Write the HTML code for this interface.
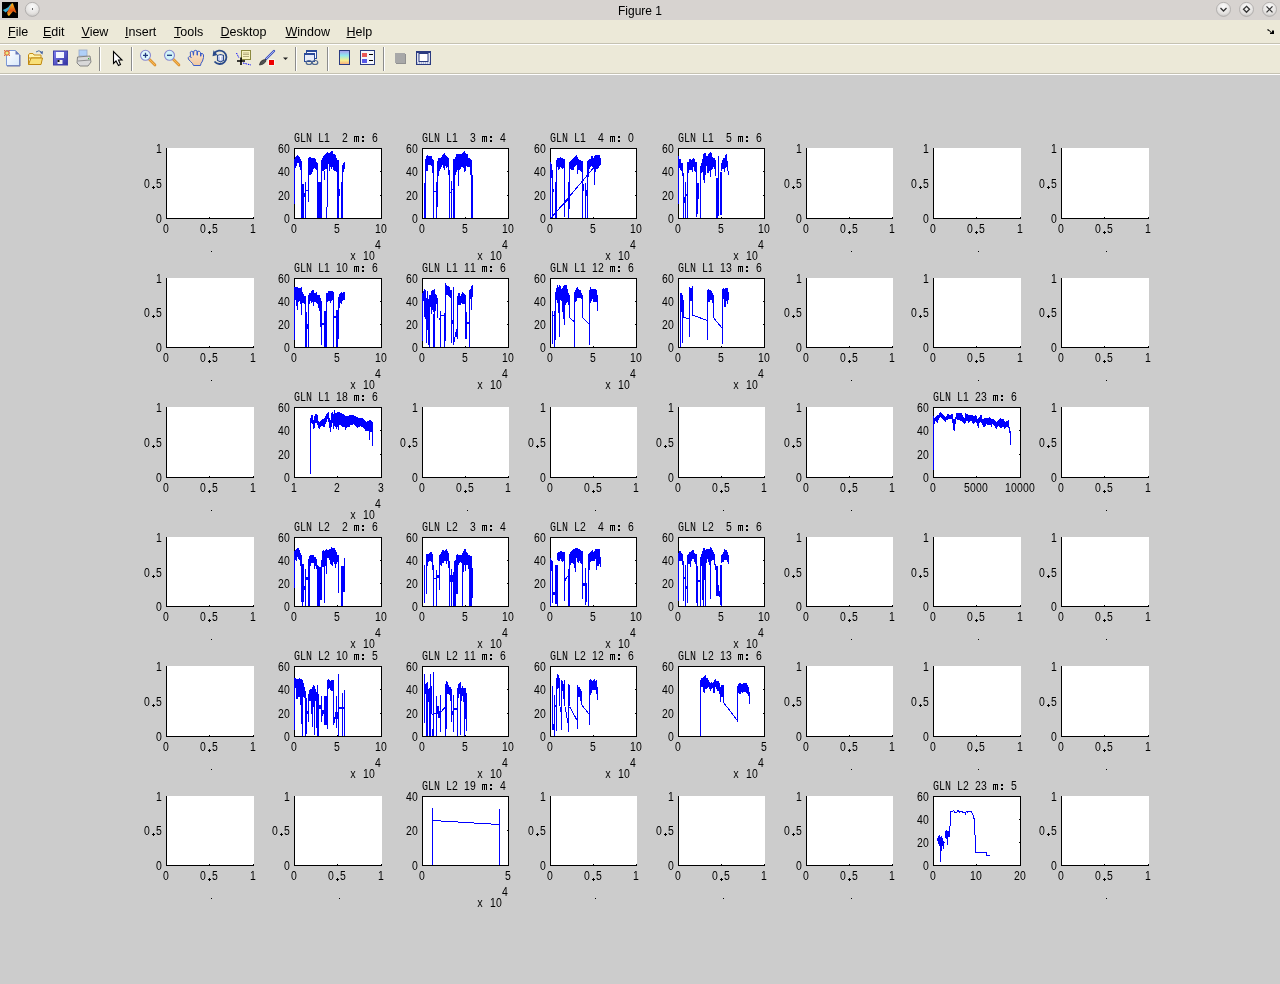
<!DOCTYPE html>
<html><head><meta charset="utf-8"><style>
html,body{margin:0;padding:0;width:1280px;height:984px;overflow:hidden;background:#cccccc;position:relative}
i{position:absolute;display:block}
b{position:absolute;font-weight:normal;font-family:"Liberation Mono",monospace;font-size:12px;line-height:12px;white-space:pre;color:#000;transform:scaleX(0.8333);transform-origin:0 0}
b.d{font-family:"Liberation Sans",sans-serif;transform:scaleX(0.87)}
.dot{width:3px;height:3px;background:linear-gradient(#000,#000) 0 1px/3px 1px no-repeat,linear-gradient(#000,#000) 1px 0/1px 3px no-repeat}
.col{width:2px;height:6px;background:linear-gradient(#000,#000) 0 0/2px 2px no-repeat,linear-gradient(#000,#000) 0 4px/2px 2px no-repeat}
.m{width:5px;height:6px;background:linear-gradient(#000,#000) 0 0/5px 1px no-repeat,linear-gradient(#000,#000) 0 0/1px 6px no-repeat,linear-gradient(#000,#000) 2px 0/1px 6px no-repeat,linear-gradient(#000,#000) 4px 0/1px 6px no-repeat}
#lab{position:absolute;left:0;top:0;width:1280px;height:984px;will-change:transform}
.mb{position:absolute;font-family:"Liberation Sans",sans-serif;font-size:12.5px;line-height:13px;color:#000;white-space:pre;text-underline-offset:1px}
#chrome{position:absolute;left:0;top:0;width:1280px;height:75px;will-change:transform}
</style></head><body>
<div id="chrome"><div style="position:absolute;left:0;top:0;width:1280px;height:20px;background:#d7d3d0"></div>
<div style="position:absolute;left:0;top:20px;width:1280px;height:23px;background:#ece9d8"></div>
<div style="position:absolute;left:0;top:43px;width:1280px;height:1px;background:#c5c2b2"></div>
<div style="position:absolute;left:0;top:44px;width:1280px;height:1px;background:#ffffff"></div>
<div style="position:absolute;left:0;top:45px;width:1280px;height:28px;background:#ece9d8"></div>
<div style="position:absolute;left:0;top:73px;width:1280px;height:1px;background:#c5c2b2"></div>
<div style="position:absolute;left:0;top:74px;width:1280px;height:1px;background:#ffffff"></div>
<div class="mb" style="left:618px;top:5px;font-size:12px;line-height:12px">Figure 1</div>
<div class="mb" style="left:8px;top:26px"><u>F</u>ile</div>
<div class="mb" style="left:43px;top:26px"><u>E</u>dit</div>
<div class="mb" style="left:81.5px;top:26px"><u>V</u>iew</div>
<div class="mb" style="left:125px;top:26px"><u>I</u>nsert</div>
<div class="mb" style="left:174px;top:26px"><u>T</u>ools</div>
<div class="mb" style="left:220.5px;top:26px"><u>D</u>esktop</div>
<div class="mb" style="left:285.5px;top:26px"><u>W</u>indow</div>
<div class="mb" style="left:346.5px;top:26px"><u>H</u>elp</div>
<svg style="position:absolute;left:0;top:0" width="1280" height="75" viewBox="0 0 1280 75">
<defs>
<radialGradient id="btn" cx="50%" cy="30%" r="70%"><stop offset="0" stop-color="#fafafa"/><stop offset="0.7" stop-color="#e4e2e0"/><stop offset="1" stop-color="#c8c6c4"/></radialGradient>
<linearGradient id="cbar" x1="0" y1="0" x2="0" y2="1"><stop offset="0" stop-color="#a898f0"/><stop offset="0.35" stop-color="#90e8f0"/><stop offset="0.7" stop-color="#f8f090"/><stop offset="1" stop-color="#f8a878"/></linearGradient>
<linearGradient id="page" x1="0" y1="0" x2="1" y2="1"><stop offset="0" stop-color="#ffffff"/><stop offset="1" stop-color="#d8e8fa"/></linearGradient>
<linearGradient id="fold" x1="0" y1="0" x2="0" y2="1"><stop offset="0" stop-color="#fff8c0"/><stop offset="1" stop-color="#f0d060"/></linearGradient>
<linearGradient id="disk" x1="0" y1="0" x2="1" y2="1"><stop offset="0" stop-color="#8080f0"/><stop offset="1" stop-color="#3030a0"/></linearGradient>
<linearGradient id="skin" x1="0" y1="0" x2="0" y2="1"><stop offset="0" stop-color="#fbe6d0"/><stop offset="1" stop-color="#f0c8a0"/></linearGradient>
<linearGradient id="peak" x1="0" y1="0" x2="0" y2="1"><stop offset="0" stop-color="#f8c020"/><stop offset="0.6" stop-color="#e05010"/><stop offset="1" stop-color="#f8d020"/></linearGradient>
</defs>
<!-- matlab logo -->
<rect x="2" y="2" width="16" height="16" fill="#000"/>
<path d="M2.8,10.1 L5.6,8.8 L8.1,7.3 L11.2,3.6 L10.9,6 L8.6,10.1 L5.6,12.4 Z" fill="#3cb0d8"/>
<path d="M7.1,12.4 L8.6,9.4 L11.6,3.4 L12.9,3.2 L14.4,7.5 L16.5,12.7 L15.2,12.4 L13.1,11.2 L10.5,14.2 L9,16.1 L7.7,15 Z" fill="url(#peak)"/>
<!-- left circle button -->
<circle cx="32.3" cy="9.4" r="7" fill="url(#btn)" stroke="#a8a6a4" stroke-width="0.8"/>
<rect x="32" y="8" width="1" height="2" fill="#666"/>
<!-- right buttons -->
<circle cx="1223.5" cy="9.4" r="7" fill="url(#btn)" stroke="#a8a6a4" stroke-width="0.8"/>
<path d="M1220.5,8 L1223.5,11 L1226.5,8" fill="none" stroke="#333" stroke-width="1.3"/>
<circle cx="1246.5" cy="9.4" r="7" fill="url(#btn)" stroke="#a8a6a4" stroke-width="0.8"/>
<path d="M1246.5,6.3 L1249.5,9.3 L1246.5,12.3 L1243.5,9.3 Z" fill="none" stroke="#333" stroke-width="1.3"/>
<circle cx="1269.5" cy="9.4" r="7" fill="url(#btn)" stroke="#a8a6a4" stroke-width="0.8"/>
<path d="M1266.5,6.4 L1272.5,12.4 M1272.5,6.4 L1266.5,12.4" fill="none" stroke="#333" stroke-width="1.3"/>
<!-- undock arrow -->
<path d="M1267,30 L1268,29 L1272,32.5 L1272,30.5 L1274,30.5 L1274,34 L1270,34 L1270,32.5 L1271.5,32.5 Z" fill="#000"/>
<!-- new file -->
<path d="M6.5,50.5 L15.5,50.5 L19.5,54.5 L19.5,65.5 L6.5,65.5 Z" fill="url(#page)" stroke="#7c9ad8" stroke-width="1"/>
<path d="M7,66 L20,66 L20,55" fill="none" stroke="#6870a8" stroke-width="1"/>
<path d="M15.5,50.5 L15.5,54.5 L19.5,54.5 Z" fill="#6878b8"/>
<circle cx="7" cy="53" r="2.2" fill="#e8f080" stroke="#e07040" stroke-width="1.2"/>
<path d="M4,50 L5,51 M10,50 L9,51 M4,56 L5,55 M10,56 L9,55" stroke="#e07040" stroke-width="1"/>
<!-- open folder -->
<path d="M28.5,55 L29.5,53.5 L33,53.5 L34,55 L41,55 L41,58 L28.5,58 Z" fill="#fff4b0" stroke="#c89018" stroke-width="1"/>
<path d="M28.5,64.5 L31,58 L42.5,58 L41,64.5 Z" fill="#f8e078" stroke="#c08810" stroke-width="1"/>
<path d="M28.5,55 L28.5,64.5" stroke="#c08810" stroke-width="1"/>
<path d="M36,52 Q39,49.5 41.5,52" fill="none" stroke="#5070a8" stroke-width="1"/>
<path d="M40,52.5 L43,51 L42.5,54.5 Z" fill="#4060a0"/>
<!-- save -->
<rect x="53.5" y="51" width="14" height="14" fill="url(#disk)" stroke="#4040a8" stroke-width="1"/>
<rect x="56" y="52" width="8" height="6" fill="#f4f6ff"/>
<rect x="57.5" y="60" width="5" height="4" fill="#f0f0f0"/>
<rect x="57.5" y="60" width="2" height="2" fill="#111"/>
<!-- print -->
<rect x="79" y="50" width="8" height="6" fill="#b0d0f8" stroke="#98a8c8" stroke-width="0.8"/>
<path d="M77.5,57 L90,56 L91,62 L88,66 L80,66 L77,63 Z" fill="#d8d8d8" stroke="#707070" stroke-width="0.8"/>
<path d="M78,61 L90,60" stroke="#909090" stroke-width="1"/>
<rect x="88" y="58" width="1.2" height="1.2" fill="#40b040"/>
<!-- separators -->
<rect x="99" y="47" width="1" height="24" fill="#8c8c8c"/><rect x="100" y="47" width="1" height="24" fill="#fff"/>
<rect x="131" y="47" width="1" height="24" fill="#8c8c8c"/><rect x="132" y="47" width="1" height="24" fill="#fff"/>
<rect x="295" y="47" width="1" height="24" fill="#8c8c8c"/><rect x="296" y="47" width="1" height="24" fill="#fff"/>
<rect x="327" y="47" width="1" height="24" fill="#8c8c8c"/><rect x="328" y="47" width="1" height="24" fill="#fff"/>
<rect x="383" y="47" width="1" height="24" fill="#8c8c8c"/><rect x="384" y="47" width="1" height="24" fill="#fff"/>
<!-- arrow cursor -->
<path d="M113.5,51.5 L113.5,63.5 L116,61 L118.5,65.5 L120.5,64.5 L118.5,60 L122,60 Z" fill="#fff" stroke="#000" stroke-width="1.1"/>
<!-- zoom in -->
<path d="M149.5,59.5 L155,65" stroke="#d08020" stroke-width="2.6" stroke-linecap="round"/>
<path d="M149.5,59.5 L155,65" stroke="#f8b850" stroke-width="1.2" stroke-linecap="round"/>
<circle cx="145.5" cy="55.3" r="5" fill="#e0f8fc" stroke="#8888d0" stroke-width="1.1"/>
<path d="M143,55.3 L148,55.3 M145.5,52.8 L145.5,57.8" stroke="#203880" stroke-width="1.3"/>
<!-- zoom out -->
<path d="M173.5,59.5 L179,65" stroke="#d08020" stroke-width="2.6" stroke-linecap="round"/>
<path d="M173.5,59.5 L179,65" stroke="#f8b850" stroke-width="1.2" stroke-linecap="round"/>
<circle cx="169.5" cy="55.3" r="5" fill="#d0f4f8" stroke="#8888d0" stroke-width="1.1"/>
<path d="M167,55.3 L172,55.3" stroke="#203880" stroke-width="1.3"/>
<!-- pan hand -->
<path d="M188.3,57.5 L189.5,56.3 L190.5,56.8 L190.3,52 L191.8,51.2 L193,52 L193.5,55 L193.8,51 L195.8,50.3 L197,51 L197.3,55 L197.5,51.3 L199.3,51.2 L200.5,52.5 L200.7,56 L201,53.5 L202.5,53.5 L203.5,55 L203.5,57.5 L202.5,61 L201,63.5 L200.5,65.5 L193.5,65.5 L192.5,63.5 L190.5,61.5 L188.3,59 Z" fill="url(#skin)" stroke="#3a5cc8" stroke-width="1"/>
<path d="M193.4,52.5 L193.4,55.5 M197.3,52 L197.3,55.5 M200.7,53.5 L200.7,56.5 M190.5,56.8 L191.5,58" stroke="#3a5cc8" stroke-width="1" fill="none"/>
<!-- rotate -->
<path d="M214.2,53.5 A6.7,6.7 0 1 1 214.5,61.5" fill="none" stroke="#2a4a8a" stroke-width="1.8"/>
<path d="M212.5,56.2 L213.6,50.3 L217.5,55 Z" fill="#2a4a8a"/>
<path d="M217.5,55.5 L220.5,54.5 L223.5,55.5 L223.5,60.5 L220.5,62 L217.5,60.5 Z" fill="#c8d0f0" stroke="#2a4a8a" stroke-width="1.1"/>
<path d="M218.5,56 L222.5,56 M220.5,56 L220.5,60" stroke="#ffffff" stroke-width="0.9"/>
<!-- data cursor -->
<rect x="241.5" y="50.5" width="9" height="9" fill="#f8f4c0" stroke="#8c8a40" stroke-width="1"/>
<path d="M243,53 L249,53 M243,54.5 L249,54.5 M243,56.5 L249,56.5" stroke="#a8a070" stroke-width="0.8"/>
<path d="M236.5,53 L239,58" stroke="#0000ff" stroke-width="1" stroke-dasharray="1.5,1"/>
<path d="M243,63 L251,65" stroke="#0000ff" stroke-width="1" stroke-dasharray="1.5,1"/>
<path d="M237,61 L245,61 M241,57.5 L241,65" stroke="#000" stroke-width="1.6"/>
<!-- brush -->
<path d="M266,59 L274,51" stroke="#3a50c0" stroke-width="2.4" stroke-linecap="round"/>
<path d="M266,59 L274,51" stroke="#c0c8f8" stroke-width="0.8"/>
<path d="M259.5,65 Q260,61 263,60 L266,59.5 L265.5,62 Q263,65 259.5,65 Z" fill="#505050" stroke="#303030" stroke-width="0.8"/>
<rect x="268.5" y="59.5" width="6" height="6" fill="#fff"/>
<rect x="269" y="60" width="5" height="5" fill="#ee0000"/>
<!-- dropdown -->
<path d="M283,57.5 L288,57.5 L285.5,60 Z" fill="#222"/>
<!-- link plots -->
<rect x="306.5" y="50.5" width="10" height="8" fill="#f8f8ff" stroke="#2a4a9a" stroke-width="1"/>
<rect x="306" y="50" width="11" height="2" fill="#2a4a9a"/>
<rect x="304.5" y="53.5" width="10" height="8" fill="#e8ecf8" stroke="#2a4a9a" stroke-width="1"/>
<rect x="304" y="53" width="11" height="2" fill="#2a4a9a"/>
<ellipse cx="309" cy="62.5" rx="2.8" ry="2" fill="none" stroke="#506890" stroke-width="1.2"/>
<ellipse cx="315" cy="62.5" rx="2.8" ry="2" fill="none" stroke="#506890" stroke-width="1.2"/>
<!-- colorbar -->
<rect x="339.5" y="50.5" width="10" height="14" fill="url(#cbar)" stroke="#2a3a80" stroke-width="1"/>
<!-- legend -->
<rect x="360.5" y="50.5" width="14" height="14" fill="#f4f6fc" stroke="#2a3a80" stroke-width="1"/>
<rect x="362" y="53" width="5" height="4" fill="#e85858"/>
<rect x="362" y="59" width="5" height="4" fill="#5858e8"/>
<path d="M369,54.5 L373,54.5 M369,60.5 L373,60.5" stroke="#000" stroke-width="1"/>
<!-- disabled square -->
<rect x="396" y="54" width="10" height="10" fill="#909090"/>
<rect x="395" y="53" width="10" height="10" fill="#a8a8a8"/>
<!-- frame -->
<rect x="416.5" y="51.5" width="14" height="13" fill="#e0e4f0" stroke="#2a3a80" stroke-width="1"/>
<rect x="416" y="51" width="15" height="2" fill="#2a3a80"/>
<rect x="419" y="53.5" width="9" height="8" fill="#fff" stroke="#2a3a80" stroke-width="1"/>
<path d="M417,63 L430,63" stroke="#8090c0" stroke-width="1.2" stroke-dasharray="1,1"/>
</svg>
</div>
<div id="lab"><i style="left:167px;top:148px;width:87px;height:70px;background:#fff"></i><i style="left:166px;top:148px;width:1px;height:71px;background:#000"></i><i style="left:166px;top:218px;width:88px;height:1px;background:#000"></i><i style="left:253px;top:217px;width:1px;height:1px;background:#000"></i><b class="d" style="left:163px;top:223px">0</b><i style="left:209px;top:217px;width:1px;height:1px;background:#000"></i><b class="d" style="left:200px;top:223px">0</b><i class="dot" style="left:208px;top:231px"></i><b class="d" style="left:212px;top:223px">5</b><b class="d" style="left:250px;top:223px">1</b><b class="d" style="left:156px;top:213px">0</b><b class="d" style="left:144px;top:178px">0</b><i class="dot" style="left:152px;top:186px"></i><b class="d" style="left:156px;top:178px">5</b><b class="d" style="left:156px;top:143px">1</b><i style="left:211px;top:251px;width:1px;height:1px;background:#000"></i><i style="left:294px;top:148px;width:88px;height:71px;background:#000"></i><i style="left:295px;top:149px;width:86px;height:69px;background:#fff"></i><b class="d" style="left:291px;top:223px">0</b><i style="left:337px;top:217px;width:1px;height:1px;background:#000"></i><b class="d" style="left:334px;top:223px">5</b><b class="d" style="left:375px;top:223px">1</b><b class="d" style="left:381px;top:223px">0</b><b class="d" style="left:284px;top:213px">0</b><i style="left:380px;top:195px;width:1px;height:1px;background:#000"></i><b class="d" style="left:278px;top:190px">2</b><b class="d" style="left:284px;top:190px">0</b><i style="left:380px;top:171px;width:1px;height:1px;background:#000"></i><b class="d" style="left:278px;top:166px">4</b><b class="d" style="left:284px;top:166px">0</b><b class="d" style="left:278px;top:143px">6</b><b class="d" style="left:284px;top:143px">0</b><b style="left:294px;top:133px">G</b><b style="left:300px;top:133px">L</b><b style="left:306px;top:133px">N</b><b style="left:318px;top:133px">L</b><b class="d" style="left:324px;top:132px">1</b><b class="d" style="left:342px;top:132px">2</b><i class="m" style="left:354px;top:136px"></i><i class="col" style="left:362px;top:136px"></i><b class="d" style="left:372px;top:132px">6</b><b class="d" style="left:375px;top:239px">4</b><b style="left:350px;top:251px">x</b><b class="d" style="left:363px;top:250px">1</b><b class="d" style="left:369px;top:250px">0</b><i style="left:422px;top:148px;width:87px;height:71px;background:#000"></i><i style="left:423px;top:149px;width:85px;height:69px;background:#fff"></i><b class="d" style="left:419px;top:223px">0</b><i style="left:465px;top:217px;width:1px;height:1px;background:#000"></i><b class="d" style="left:462px;top:223px">5</b><b class="d" style="left:502px;top:223px">1</b><b class="d" style="left:508px;top:223px">0</b><b class="d" style="left:412px;top:213px">0</b><i style="left:507px;top:195px;width:1px;height:1px;background:#000"></i><b class="d" style="left:406px;top:190px">2</b><b class="d" style="left:412px;top:190px">0</b><i style="left:507px;top:171px;width:1px;height:1px;background:#000"></i><b class="d" style="left:406px;top:166px">4</b><b class="d" style="left:412px;top:166px">0</b><b class="d" style="left:406px;top:143px">6</b><b class="d" style="left:412px;top:143px">0</b><b style="left:422px;top:133px">G</b><b style="left:428px;top:133px">L</b><b style="left:434px;top:133px">N</b><b style="left:446px;top:133px">L</b><b class="d" style="left:452px;top:132px">1</b><b class="d" style="left:470px;top:132px">3</b><i class="m" style="left:482px;top:136px"></i><i class="col" style="left:490px;top:136px"></i><b class="d" style="left:500px;top:132px">4</b><b class="d" style="left:502px;top:239px">4</b><b style="left:477px;top:251px">x</b><b class="d" style="left:490px;top:250px">1</b><b class="d" style="left:496px;top:250px">0</b><i style="left:550px;top:148px;width:87px;height:71px;background:#000"></i><i style="left:551px;top:149px;width:85px;height:69px;background:#fff"></i><b class="d" style="left:547px;top:223px">0</b><i style="left:593px;top:217px;width:1px;height:1px;background:#000"></i><b class="d" style="left:590px;top:223px">5</b><b class="d" style="left:630px;top:223px">1</b><b class="d" style="left:636px;top:223px">0</b><b class="d" style="left:540px;top:213px">0</b><i style="left:635px;top:195px;width:1px;height:1px;background:#000"></i><b class="d" style="left:534px;top:190px">2</b><b class="d" style="left:540px;top:190px">0</b><i style="left:635px;top:171px;width:1px;height:1px;background:#000"></i><b class="d" style="left:534px;top:166px">4</b><b class="d" style="left:540px;top:166px">0</b><b class="d" style="left:534px;top:143px">6</b><b class="d" style="left:540px;top:143px">0</b><b style="left:550px;top:133px">G</b><b style="left:556px;top:133px">L</b><b style="left:562px;top:133px">N</b><b style="left:574px;top:133px">L</b><b class="d" style="left:580px;top:132px">1</b><b class="d" style="left:598px;top:132px">4</b><i class="m" style="left:610px;top:136px"></i><i class="col" style="left:618px;top:136px"></i><b class="d" style="left:628px;top:132px">0</b><b class="d" style="left:630px;top:239px">4</b><b style="left:605px;top:251px">x</b><b class="d" style="left:618px;top:250px">1</b><b class="d" style="left:624px;top:250px">0</b><i style="left:678px;top:148px;width:87px;height:71px;background:#000"></i><i style="left:679px;top:149px;width:85px;height:69px;background:#fff"></i><b class="d" style="left:675px;top:223px">0</b><i style="left:721px;top:217px;width:1px;height:1px;background:#000"></i><b class="d" style="left:718px;top:223px">5</b><b class="d" style="left:758px;top:223px">1</b><b class="d" style="left:764px;top:223px">0</b><b class="d" style="left:668px;top:213px">0</b><i style="left:763px;top:195px;width:1px;height:1px;background:#000"></i><b class="d" style="left:662px;top:190px">2</b><b class="d" style="left:668px;top:190px">0</b><i style="left:763px;top:171px;width:1px;height:1px;background:#000"></i><b class="d" style="left:662px;top:166px">4</b><b class="d" style="left:668px;top:166px">0</b><b class="d" style="left:662px;top:143px">6</b><b class="d" style="left:668px;top:143px">0</b><b style="left:678px;top:133px">G</b><b style="left:684px;top:133px">L</b><b style="left:690px;top:133px">N</b><b style="left:702px;top:133px">L</b><b class="d" style="left:708px;top:132px">1</b><b class="d" style="left:726px;top:132px">5</b><i class="m" style="left:738px;top:136px"></i><i class="col" style="left:746px;top:136px"></i><b class="d" style="left:756px;top:132px">6</b><b class="d" style="left:758px;top:239px">4</b><b style="left:733px;top:251px">x</b><b class="d" style="left:746px;top:250px">1</b><b class="d" style="left:752px;top:250px">0</b><i style="left:807px;top:148px;width:86px;height:70px;background:#fff"></i><i style="left:806px;top:148px;width:1px;height:71px;background:#000"></i><i style="left:806px;top:218px;width:87px;height:1px;background:#000"></i><i style="left:892px;top:217px;width:1px;height:1px;background:#000"></i><b class="d" style="left:803px;top:223px">0</b><i style="left:849px;top:217px;width:1px;height:1px;background:#000"></i><b class="d" style="left:840px;top:223px">0</b><i class="dot" style="left:848px;top:231px"></i><b class="d" style="left:852px;top:223px">5</b><b class="d" style="left:889px;top:223px">1</b><b class="d" style="left:796px;top:213px">0</b><b class="d" style="left:784px;top:178px">0</b><i class="dot" style="left:792px;top:186px"></i><b class="d" style="left:796px;top:178px">5</b><b class="d" style="left:796px;top:143px">1</b><i style="left:851px;top:251px;width:1px;height:1px;background:#000"></i><i style="left:934px;top:148px;width:87px;height:70px;background:#fff"></i><i style="left:933px;top:148px;width:1px;height:71px;background:#000"></i><i style="left:933px;top:218px;width:88px;height:1px;background:#000"></i><i style="left:1020px;top:217px;width:1px;height:1px;background:#000"></i><b class="d" style="left:930px;top:223px">0</b><i style="left:976px;top:217px;width:1px;height:1px;background:#000"></i><b class="d" style="left:967px;top:223px">0</b><i class="dot" style="left:975px;top:231px"></i><b class="d" style="left:979px;top:223px">5</b><b class="d" style="left:1017px;top:223px">1</b><b class="d" style="left:923px;top:213px">0</b><b class="d" style="left:911px;top:178px">0</b><i class="dot" style="left:919px;top:186px"></i><b class="d" style="left:923px;top:178px">5</b><b class="d" style="left:923px;top:143px">1</b><i style="left:978px;top:251px;width:1px;height:1px;background:#000"></i><i style="left:1062px;top:148px;width:87px;height:70px;background:#fff"></i><i style="left:1061px;top:148px;width:1px;height:71px;background:#000"></i><i style="left:1061px;top:218px;width:88px;height:1px;background:#000"></i><i style="left:1148px;top:217px;width:1px;height:1px;background:#000"></i><b class="d" style="left:1058px;top:223px">0</b><i style="left:1104px;top:217px;width:1px;height:1px;background:#000"></i><b class="d" style="left:1095px;top:223px">0</b><i class="dot" style="left:1103px;top:231px"></i><b class="d" style="left:1107px;top:223px">5</b><b class="d" style="left:1145px;top:223px">1</b><b class="d" style="left:1051px;top:213px">0</b><b class="d" style="left:1039px;top:178px">0</b><i class="dot" style="left:1047px;top:186px"></i><b class="d" style="left:1051px;top:178px">5</b><b class="d" style="left:1051px;top:143px">1</b><i style="left:1106px;top:251px;width:1px;height:1px;background:#000"></i><i style="left:167px;top:278px;width:87px;height:69px;background:#fff"></i><i style="left:166px;top:278px;width:1px;height:70px;background:#000"></i><i style="left:166px;top:347px;width:88px;height:1px;background:#000"></i><i style="left:253px;top:346px;width:1px;height:1px;background:#000"></i><b class="d" style="left:163px;top:352px">0</b><i style="left:209px;top:346px;width:1px;height:1px;background:#000"></i><b class="d" style="left:200px;top:352px">0</b><i class="dot" style="left:208px;top:360px"></i><b class="d" style="left:212px;top:352px">5</b><b class="d" style="left:250px;top:352px">1</b><b class="d" style="left:156px;top:342px">0</b><b class="d" style="left:144px;top:307px">0</b><i class="dot" style="left:152px;top:315px"></i><b class="d" style="left:156px;top:307px">5</b><b class="d" style="left:156px;top:273px">1</b><i style="left:211px;top:380px;width:1px;height:1px;background:#000"></i><i style="left:294px;top:278px;width:88px;height:70px;background:#000"></i><i style="left:295px;top:279px;width:86px;height:68px;background:#fff"></i><b class="d" style="left:291px;top:352px">0</b><i style="left:337px;top:346px;width:1px;height:1px;background:#000"></i><b class="d" style="left:334px;top:352px">5</b><b class="d" style="left:375px;top:352px">1</b><b class="d" style="left:381px;top:352px">0</b><b class="d" style="left:284px;top:342px">0</b><i style="left:380px;top:324px;width:1px;height:1px;background:#000"></i><b class="d" style="left:278px;top:319px">2</b><b class="d" style="left:284px;top:319px">0</b><i style="left:380px;top:301px;width:1px;height:1px;background:#000"></i><b class="d" style="left:278px;top:296px">4</b><b class="d" style="left:284px;top:296px">0</b><b class="d" style="left:278px;top:273px">6</b><b class="d" style="left:284px;top:273px">0</b><b style="left:294px;top:263px">G</b><b style="left:300px;top:263px">L</b><b style="left:306px;top:263px">N</b><b style="left:318px;top:263px">L</b><b class="d" style="left:324px;top:262px">1</b><b class="d" style="left:336px;top:262px">1</b><b class="d" style="left:342px;top:262px">0</b><i class="m" style="left:354px;top:266px"></i><i class="col" style="left:362px;top:266px"></i><b class="d" style="left:372px;top:262px">6</b><b class="d" style="left:375px;top:368px">4</b><b style="left:350px;top:380px">x</b><b class="d" style="left:363px;top:379px">1</b><b class="d" style="left:369px;top:379px">0</b><i style="left:422px;top:278px;width:87px;height:70px;background:#000"></i><i style="left:423px;top:279px;width:85px;height:68px;background:#fff"></i><b class="d" style="left:419px;top:352px">0</b><i style="left:465px;top:346px;width:1px;height:1px;background:#000"></i><b class="d" style="left:462px;top:352px">5</b><b class="d" style="left:502px;top:352px">1</b><b class="d" style="left:508px;top:352px">0</b><b class="d" style="left:412px;top:342px">0</b><i style="left:507px;top:324px;width:1px;height:1px;background:#000"></i><b class="d" style="left:406px;top:319px">2</b><b class="d" style="left:412px;top:319px">0</b><i style="left:507px;top:301px;width:1px;height:1px;background:#000"></i><b class="d" style="left:406px;top:296px">4</b><b class="d" style="left:412px;top:296px">0</b><b class="d" style="left:406px;top:273px">6</b><b class="d" style="left:412px;top:273px">0</b><b style="left:422px;top:263px">G</b><b style="left:428px;top:263px">L</b><b style="left:434px;top:263px">N</b><b style="left:446px;top:263px">L</b><b class="d" style="left:452px;top:262px">1</b><b class="d" style="left:464px;top:262px">1</b><b class="d" style="left:470px;top:262px">1</b><i class="m" style="left:482px;top:266px"></i><i class="col" style="left:490px;top:266px"></i><b class="d" style="left:500px;top:262px">6</b><b class="d" style="left:502px;top:368px">4</b><b style="left:477px;top:380px">x</b><b class="d" style="left:490px;top:379px">1</b><b class="d" style="left:496px;top:379px">0</b><i style="left:550px;top:278px;width:87px;height:70px;background:#000"></i><i style="left:551px;top:279px;width:85px;height:68px;background:#fff"></i><b class="d" style="left:547px;top:352px">0</b><i style="left:593px;top:346px;width:1px;height:1px;background:#000"></i><b class="d" style="left:590px;top:352px">5</b><b class="d" style="left:630px;top:352px">1</b><b class="d" style="left:636px;top:352px">0</b><b class="d" style="left:540px;top:342px">0</b><i style="left:635px;top:324px;width:1px;height:1px;background:#000"></i><b class="d" style="left:534px;top:319px">2</b><b class="d" style="left:540px;top:319px">0</b><i style="left:635px;top:301px;width:1px;height:1px;background:#000"></i><b class="d" style="left:534px;top:296px">4</b><b class="d" style="left:540px;top:296px">0</b><b class="d" style="left:534px;top:273px">6</b><b class="d" style="left:540px;top:273px">0</b><b style="left:550px;top:263px">G</b><b style="left:556px;top:263px">L</b><b style="left:562px;top:263px">N</b><b style="left:574px;top:263px">L</b><b class="d" style="left:580px;top:262px">1</b><b class="d" style="left:592px;top:262px">1</b><b class="d" style="left:598px;top:262px">2</b><i class="m" style="left:610px;top:266px"></i><i class="col" style="left:618px;top:266px"></i><b class="d" style="left:628px;top:262px">6</b><b class="d" style="left:630px;top:368px">4</b><b style="left:605px;top:380px">x</b><b class="d" style="left:618px;top:379px">1</b><b class="d" style="left:624px;top:379px">0</b><i style="left:678px;top:278px;width:87px;height:70px;background:#000"></i><i style="left:679px;top:279px;width:85px;height:68px;background:#fff"></i><b class="d" style="left:675px;top:352px">0</b><i style="left:721px;top:346px;width:1px;height:1px;background:#000"></i><b class="d" style="left:718px;top:352px">5</b><b class="d" style="left:758px;top:352px">1</b><b class="d" style="left:764px;top:352px">0</b><b class="d" style="left:668px;top:342px">0</b><i style="left:763px;top:324px;width:1px;height:1px;background:#000"></i><b class="d" style="left:662px;top:319px">2</b><b class="d" style="left:668px;top:319px">0</b><i style="left:763px;top:301px;width:1px;height:1px;background:#000"></i><b class="d" style="left:662px;top:296px">4</b><b class="d" style="left:668px;top:296px">0</b><b class="d" style="left:662px;top:273px">6</b><b class="d" style="left:668px;top:273px">0</b><b style="left:678px;top:263px">G</b><b style="left:684px;top:263px">L</b><b style="left:690px;top:263px">N</b><b style="left:702px;top:263px">L</b><b class="d" style="left:708px;top:262px">1</b><b class="d" style="left:720px;top:262px">1</b><b class="d" style="left:726px;top:262px">3</b><i class="m" style="left:738px;top:266px"></i><i class="col" style="left:746px;top:266px"></i><b class="d" style="left:756px;top:262px">6</b><b class="d" style="left:758px;top:368px">4</b><b style="left:733px;top:380px">x</b><b class="d" style="left:746px;top:379px">1</b><b class="d" style="left:752px;top:379px">0</b><i style="left:807px;top:278px;width:86px;height:69px;background:#fff"></i><i style="left:806px;top:278px;width:1px;height:70px;background:#000"></i><i style="left:806px;top:347px;width:87px;height:1px;background:#000"></i><i style="left:892px;top:346px;width:1px;height:1px;background:#000"></i><b class="d" style="left:803px;top:352px">0</b><i style="left:849px;top:346px;width:1px;height:1px;background:#000"></i><b class="d" style="left:840px;top:352px">0</b><i class="dot" style="left:848px;top:360px"></i><b class="d" style="left:852px;top:352px">5</b><b class="d" style="left:889px;top:352px">1</b><b class="d" style="left:796px;top:342px">0</b><b class="d" style="left:784px;top:307px">0</b><i class="dot" style="left:792px;top:315px"></i><b class="d" style="left:796px;top:307px">5</b><b class="d" style="left:796px;top:273px">1</b><i style="left:851px;top:380px;width:1px;height:1px;background:#000"></i><i style="left:934px;top:278px;width:87px;height:69px;background:#fff"></i><i style="left:933px;top:278px;width:1px;height:70px;background:#000"></i><i style="left:933px;top:347px;width:88px;height:1px;background:#000"></i><i style="left:1020px;top:346px;width:1px;height:1px;background:#000"></i><b class="d" style="left:930px;top:352px">0</b><i style="left:976px;top:346px;width:1px;height:1px;background:#000"></i><b class="d" style="left:967px;top:352px">0</b><i class="dot" style="left:975px;top:360px"></i><b class="d" style="left:979px;top:352px">5</b><b class="d" style="left:1017px;top:352px">1</b><b class="d" style="left:923px;top:342px">0</b><b class="d" style="left:911px;top:307px">0</b><i class="dot" style="left:919px;top:315px"></i><b class="d" style="left:923px;top:307px">5</b><b class="d" style="left:923px;top:273px">1</b><i style="left:978px;top:380px;width:1px;height:1px;background:#000"></i><i style="left:1062px;top:278px;width:87px;height:69px;background:#fff"></i><i style="left:1061px;top:278px;width:1px;height:70px;background:#000"></i><i style="left:1061px;top:347px;width:88px;height:1px;background:#000"></i><i style="left:1148px;top:346px;width:1px;height:1px;background:#000"></i><b class="d" style="left:1058px;top:352px">0</b><i style="left:1104px;top:346px;width:1px;height:1px;background:#000"></i><b class="d" style="left:1095px;top:352px">0</b><i class="dot" style="left:1103px;top:360px"></i><b class="d" style="left:1107px;top:352px">5</b><b class="d" style="left:1145px;top:352px">1</b><b class="d" style="left:1051px;top:342px">0</b><b class="d" style="left:1039px;top:307px">0</b><i class="dot" style="left:1047px;top:315px"></i><b class="d" style="left:1051px;top:307px">5</b><b class="d" style="left:1051px;top:273px">1</b><i style="left:1106px;top:380px;width:1px;height:1px;background:#000"></i><i style="left:167px;top:407px;width:87px;height:70px;background:#fff"></i><i style="left:166px;top:407px;width:1px;height:71px;background:#000"></i><i style="left:166px;top:477px;width:88px;height:1px;background:#000"></i><i style="left:253px;top:476px;width:1px;height:1px;background:#000"></i><b class="d" style="left:163px;top:482px">0</b><i style="left:209px;top:476px;width:1px;height:1px;background:#000"></i><b class="d" style="left:200px;top:482px">0</b><i class="dot" style="left:208px;top:490px"></i><b class="d" style="left:212px;top:482px">5</b><b class="d" style="left:250px;top:482px">1</b><b class="d" style="left:156px;top:472px">0</b><b class="d" style="left:144px;top:437px">0</b><i class="dot" style="left:152px;top:445px"></i><b class="d" style="left:156px;top:437px">5</b><b class="d" style="left:156px;top:402px">1</b><i style="left:211px;top:510px;width:1px;height:1px;background:#000"></i><i style="left:294px;top:407px;width:88px;height:71px;background:#000"></i><i style="left:295px;top:408px;width:86px;height:69px;background:#fff"></i><b class="d" style="left:291px;top:482px">1</b><i style="left:337px;top:476px;width:1px;height:1px;background:#000"></i><b class="d" style="left:334px;top:482px">2</b><b class="d" style="left:378px;top:482px">3</b><b class="d" style="left:284px;top:472px">0</b><i style="left:380px;top:454px;width:1px;height:1px;background:#000"></i><b class="d" style="left:278px;top:449px">2</b><b class="d" style="left:284px;top:449px">0</b><i style="left:380px;top:430px;width:1px;height:1px;background:#000"></i><b class="d" style="left:278px;top:425px">4</b><b class="d" style="left:284px;top:425px">0</b><b class="d" style="left:278px;top:402px">6</b><b class="d" style="left:284px;top:402px">0</b><b style="left:294px;top:392px">G</b><b style="left:300px;top:392px">L</b><b style="left:306px;top:392px">N</b><b style="left:318px;top:392px">L</b><b class="d" style="left:324px;top:391px">1</b><b class="d" style="left:336px;top:391px">1</b><b class="d" style="left:342px;top:391px">8</b><i class="m" style="left:354px;top:395px"></i><i class="col" style="left:362px;top:395px"></i><b class="d" style="left:372px;top:391px">6</b><b class="d" style="left:375px;top:498px">4</b><b style="left:350px;top:510px">x</b><b class="d" style="left:363px;top:509px">1</b><b class="d" style="left:369px;top:509px">0</b><i style="left:423px;top:407px;width:86px;height:70px;background:#fff"></i><i style="left:422px;top:407px;width:1px;height:71px;background:#000"></i><i style="left:422px;top:477px;width:87px;height:1px;background:#000"></i><i style="left:508px;top:476px;width:1px;height:1px;background:#000"></i><b class="d" style="left:419px;top:482px">0</b><i style="left:465px;top:476px;width:1px;height:1px;background:#000"></i><b class="d" style="left:456px;top:482px">0</b><i class="dot" style="left:464px;top:490px"></i><b class="d" style="left:468px;top:482px">5</b><b class="d" style="left:505px;top:482px">1</b><b class="d" style="left:412px;top:472px">0</b><b class="d" style="left:400px;top:437px">0</b><i class="dot" style="left:408px;top:445px"></i><b class="d" style="left:412px;top:437px">5</b><b class="d" style="left:412px;top:402px">1</b><i style="left:467px;top:510px;width:1px;height:1px;background:#000"></i><i style="left:551px;top:407px;width:86px;height:70px;background:#fff"></i><i style="left:550px;top:407px;width:1px;height:71px;background:#000"></i><i style="left:550px;top:477px;width:87px;height:1px;background:#000"></i><i style="left:636px;top:476px;width:1px;height:1px;background:#000"></i><b class="d" style="left:547px;top:482px">0</b><i style="left:593px;top:476px;width:1px;height:1px;background:#000"></i><b class="d" style="left:584px;top:482px">0</b><i class="dot" style="left:592px;top:490px"></i><b class="d" style="left:596px;top:482px">5</b><b class="d" style="left:633px;top:482px">1</b><b class="d" style="left:540px;top:472px">0</b><b class="d" style="left:528px;top:437px">0</b><i class="dot" style="left:536px;top:445px"></i><b class="d" style="left:540px;top:437px">5</b><b class="d" style="left:540px;top:402px">1</b><i style="left:595px;top:510px;width:1px;height:1px;background:#000"></i><i style="left:679px;top:407px;width:86px;height:70px;background:#fff"></i><i style="left:678px;top:407px;width:1px;height:71px;background:#000"></i><i style="left:678px;top:477px;width:87px;height:1px;background:#000"></i><i style="left:764px;top:476px;width:1px;height:1px;background:#000"></i><b class="d" style="left:675px;top:482px">0</b><i style="left:721px;top:476px;width:1px;height:1px;background:#000"></i><b class="d" style="left:712px;top:482px">0</b><i class="dot" style="left:720px;top:490px"></i><b class="d" style="left:724px;top:482px">5</b><b class="d" style="left:761px;top:482px">1</b><b class="d" style="left:668px;top:472px">0</b><b class="d" style="left:656px;top:437px">0</b><i class="dot" style="left:664px;top:445px"></i><b class="d" style="left:668px;top:437px">5</b><b class="d" style="left:668px;top:402px">1</b><i style="left:723px;top:510px;width:1px;height:1px;background:#000"></i><i style="left:807px;top:407px;width:86px;height:70px;background:#fff"></i><i style="left:806px;top:407px;width:1px;height:71px;background:#000"></i><i style="left:806px;top:477px;width:87px;height:1px;background:#000"></i><i style="left:892px;top:476px;width:1px;height:1px;background:#000"></i><b class="d" style="left:803px;top:482px">0</b><i style="left:849px;top:476px;width:1px;height:1px;background:#000"></i><b class="d" style="left:840px;top:482px">0</b><i class="dot" style="left:848px;top:490px"></i><b class="d" style="left:852px;top:482px">5</b><b class="d" style="left:889px;top:482px">1</b><b class="d" style="left:796px;top:472px">0</b><b class="d" style="left:784px;top:437px">0</b><i class="dot" style="left:792px;top:445px"></i><b class="d" style="left:796px;top:437px">5</b><b class="d" style="left:796px;top:402px">1</b><i style="left:851px;top:510px;width:1px;height:1px;background:#000"></i><i style="left:933px;top:407px;width:88px;height:71px;background:#000"></i><i style="left:934px;top:408px;width:86px;height:69px;background:#fff"></i><b class="d" style="left:930px;top:482px">0</b><i style="left:976px;top:476px;width:1px;height:1px;background:#000"></i><b class="d" style="left:964px;top:482px">5</b><b class="d" style="left:970px;top:482px">0</b><b class="d" style="left:976px;top:482px">0</b><b class="d" style="left:982px;top:482px">0</b><b class="d" style="left:1005px;top:482px">1</b><b class="d" style="left:1011px;top:482px">0</b><b class="d" style="left:1017px;top:482px">0</b><b class="d" style="left:1023px;top:482px">0</b><b class="d" style="left:1029px;top:482px">0</b><b class="d" style="left:923px;top:472px">0</b><i style="left:1019px;top:454px;width:1px;height:1px;background:#000"></i><b class="d" style="left:917px;top:449px">2</b><b class="d" style="left:923px;top:449px">0</b><i style="left:1019px;top:430px;width:1px;height:1px;background:#000"></i><b class="d" style="left:917px;top:425px">4</b><b class="d" style="left:923px;top:425px">0</b><b class="d" style="left:917px;top:402px">6</b><b class="d" style="left:923px;top:402px">0</b><b style="left:933px;top:392px">G</b><b style="left:939px;top:392px">L</b><b style="left:945px;top:392px">N</b><b style="left:957px;top:392px">L</b><b class="d" style="left:963px;top:391px">1</b><b class="d" style="left:975px;top:391px">2</b><b class="d" style="left:981px;top:391px">3</b><i class="m" style="left:993px;top:395px"></i><i class="col" style="left:1001px;top:395px"></i><b class="d" style="left:1011px;top:391px">6</b><i style="left:1062px;top:407px;width:87px;height:70px;background:#fff"></i><i style="left:1061px;top:407px;width:1px;height:71px;background:#000"></i><i style="left:1061px;top:477px;width:88px;height:1px;background:#000"></i><i style="left:1148px;top:476px;width:1px;height:1px;background:#000"></i><b class="d" style="left:1058px;top:482px">0</b><i style="left:1104px;top:476px;width:1px;height:1px;background:#000"></i><b class="d" style="left:1095px;top:482px">0</b><i class="dot" style="left:1103px;top:490px"></i><b class="d" style="left:1107px;top:482px">5</b><b class="d" style="left:1145px;top:482px">1</b><b class="d" style="left:1051px;top:472px">0</b><b class="d" style="left:1039px;top:437px">0</b><i class="dot" style="left:1047px;top:445px"></i><b class="d" style="left:1051px;top:437px">5</b><b class="d" style="left:1051px;top:402px">1</b><i style="left:1106px;top:510px;width:1px;height:1px;background:#000"></i><i style="left:167px;top:537px;width:87px;height:69px;background:#fff"></i><i style="left:166px;top:537px;width:1px;height:70px;background:#000"></i><i style="left:166px;top:606px;width:88px;height:1px;background:#000"></i><i style="left:253px;top:605px;width:1px;height:1px;background:#000"></i><b class="d" style="left:163px;top:611px">0</b><i style="left:209px;top:605px;width:1px;height:1px;background:#000"></i><b class="d" style="left:200px;top:611px">0</b><i class="dot" style="left:208px;top:619px"></i><b class="d" style="left:212px;top:611px">5</b><b class="d" style="left:250px;top:611px">1</b><b class="d" style="left:156px;top:601px">0</b><b class="d" style="left:144px;top:567px">0</b><i class="dot" style="left:152px;top:575px"></i><b class="d" style="left:156px;top:567px">5</b><b class="d" style="left:156px;top:532px">1</b><i style="left:211px;top:639px;width:1px;height:1px;background:#000"></i><i style="left:294px;top:537px;width:88px;height:70px;background:#000"></i><i style="left:295px;top:538px;width:86px;height:68px;background:#fff"></i><b class="d" style="left:291px;top:611px">0</b><i style="left:337px;top:605px;width:1px;height:1px;background:#000"></i><b class="d" style="left:334px;top:611px">5</b><b class="d" style="left:375px;top:611px">1</b><b class="d" style="left:381px;top:611px">0</b><b class="d" style="left:284px;top:601px">0</b><i style="left:380px;top:583px;width:1px;height:1px;background:#000"></i><b class="d" style="left:278px;top:578px">2</b><b class="d" style="left:284px;top:578px">0</b><i style="left:380px;top:560px;width:1px;height:1px;background:#000"></i><b class="d" style="left:278px;top:555px">4</b><b class="d" style="left:284px;top:555px">0</b><b class="d" style="left:278px;top:532px">6</b><b class="d" style="left:284px;top:532px">0</b><b style="left:294px;top:522px">G</b><b style="left:300px;top:522px">L</b><b style="left:306px;top:522px">N</b><b style="left:318px;top:522px">L</b><b class="d" style="left:324px;top:521px">2</b><b class="d" style="left:342px;top:521px">2</b><i class="m" style="left:354px;top:525px"></i><i class="col" style="left:362px;top:525px"></i><b class="d" style="left:372px;top:521px">6</b><b class="d" style="left:375px;top:627px">4</b><b style="left:350px;top:639px">x</b><b class="d" style="left:363px;top:638px">1</b><b class="d" style="left:369px;top:638px">0</b><i style="left:422px;top:537px;width:87px;height:70px;background:#000"></i><i style="left:423px;top:538px;width:85px;height:68px;background:#fff"></i><b class="d" style="left:419px;top:611px">0</b><i style="left:465px;top:605px;width:1px;height:1px;background:#000"></i><b class="d" style="left:462px;top:611px">5</b><b class="d" style="left:502px;top:611px">1</b><b class="d" style="left:508px;top:611px">0</b><b class="d" style="left:412px;top:601px">0</b><i style="left:507px;top:583px;width:1px;height:1px;background:#000"></i><b class="d" style="left:406px;top:578px">2</b><b class="d" style="left:412px;top:578px">0</b><i style="left:507px;top:560px;width:1px;height:1px;background:#000"></i><b class="d" style="left:406px;top:555px">4</b><b class="d" style="left:412px;top:555px">0</b><b class="d" style="left:406px;top:532px">6</b><b class="d" style="left:412px;top:532px">0</b><b style="left:422px;top:522px">G</b><b style="left:428px;top:522px">L</b><b style="left:434px;top:522px">N</b><b style="left:446px;top:522px">L</b><b class="d" style="left:452px;top:521px">2</b><b class="d" style="left:470px;top:521px">3</b><i class="m" style="left:482px;top:525px"></i><i class="col" style="left:490px;top:525px"></i><b class="d" style="left:500px;top:521px">4</b><b class="d" style="left:502px;top:627px">4</b><b style="left:477px;top:639px">x</b><b class="d" style="left:490px;top:638px">1</b><b class="d" style="left:496px;top:638px">0</b><i style="left:550px;top:537px;width:87px;height:70px;background:#000"></i><i style="left:551px;top:538px;width:85px;height:68px;background:#fff"></i><b class="d" style="left:547px;top:611px">0</b><i style="left:593px;top:605px;width:1px;height:1px;background:#000"></i><b class="d" style="left:590px;top:611px">5</b><b class="d" style="left:630px;top:611px">1</b><b class="d" style="left:636px;top:611px">0</b><b class="d" style="left:540px;top:601px">0</b><i style="left:635px;top:583px;width:1px;height:1px;background:#000"></i><b class="d" style="left:534px;top:578px">2</b><b class="d" style="left:540px;top:578px">0</b><i style="left:635px;top:560px;width:1px;height:1px;background:#000"></i><b class="d" style="left:534px;top:555px">4</b><b class="d" style="left:540px;top:555px">0</b><b class="d" style="left:534px;top:532px">6</b><b class="d" style="left:540px;top:532px">0</b><b style="left:550px;top:522px">G</b><b style="left:556px;top:522px">L</b><b style="left:562px;top:522px">N</b><b style="left:574px;top:522px">L</b><b class="d" style="left:580px;top:521px">2</b><b class="d" style="left:598px;top:521px">4</b><i class="m" style="left:610px;top:525px"></i><i class="col" style="left:618px;top:525px"></i><b class="d" style="left:628px;top:521px">6</b><b class="d" style="left:630px;top:627px">4</b><b style="left:605px;top:639px">x</b><b class="d" style="left:618px;top:638px">1</b><b class="d" style="left:624px;top:638px">0</b><i style="left:678px;top:537px;width:87px;height:70px;background:#000"></i><i style="left:679px;top:538px;width:85px;height:68px;background:#fff"></i><b class="d" style="left:675px;top:611px">0</b><i style="left:721px;top:605px;width:1px;height:1px;background:#000"></i><b class="d" style="left:718px;top:611px">5</b><b class="d" style="left:758px;top:611px">1</b><b class="d" style="left:764px;top:611px">0</b><b class="d" style="left:668px;top:601px">0</b><i style="left:763px;top:583px;width:1px;height:1px;background:#000"></i><b class="d" style="left:662px;top:578px">2</b><b class="d" style="left:668px;top:578px">0</b><i style="left:763px;top:560px;width:1px;height:1px;background:#000"></i><b class="d" style="left:662px;top:555px">4</b><b class="d" style="left:668px;top:555px">0</b><b class="d" style="left:662px;top:532px">6</b><b class="d" style="left:668px;top:532px">0</b><b style="left:678px;top:522px">G</b><b style="left:684px;top:522px">L</b><b style="left:690px;top:522px">N</b><b style="left:702px;top:522px">L</b><b class="d" style="left:708px;top:521px">2</b><b class="d" style="left:726px;top:521px">5</b><i class="m" style="left:738px;top:525px"></i><i class="col" style="left:746px;top:525px"></i><b class="d" style="left:756px;top:521px">6</b><b class="d" style="left:758px;top:627px">4</b><b style="left:733px;top:639px">x</b><b class="d" style="left:746px;top:638px">1</b><b class="d" style="left:752px;top:638px">0</b><i style="left:807px;top:537px;width:86px;height:69px;background:#fff"></i><i style="left:806px;top:537px;width:1px;height:70px;background:#000"></i><i style="left:806px;top:606px;width:87px;height:1px;background:#000"></i><i style="left:892px;top:605px;width:1px;height:1px;background:#000"></i><b class="d" style="left:803px;top:611px">0</b><i style="left:849px;top:605px;width:1px;height:1px;background:#000"></i><b class="d" style="left:840px;top:611px">0</b><i class="dot" style="left:848px;top:619px"></i><b class="d" style="left:852px;top:611px">5</b><b class="d" style="left:889px;top:611px">1</b><b class="d" style="left:796px;top:601px">0</b><b class="d" style="left:784px;top:567px">0</b><i class="dot" style="left:792px;top:575px"></i><b class="d" style="left:796px;top:567px">5</b><b class="d" style="left:796px;top:532px">1</b><i style="left:851px;top:639px;width:1px;height:1px;background:#000"></i><i style="left:934px;top:537px;width:87px;height:69px;background:#fff"></i><i style="left:933px;top:537px;width:1px;height:70px;background:#000"></i><i style="left:933px;top:606px;width:88px;height:1px;background:#000"></i><i style="left:1020px;top:605px;width:1px;height:1px;background:#000"></i><b class="d" style="left:930px;top:611px">0</b><i style="left:976px;top:605px;width:1px;height:1px;background:#000"></i><b class="d" style="left:967px;top:611px">0</b><i class="dot" style="left:975px;top:619px"></i><b class="d" style="left:979px;top:611px">5</b><b class="d" style="left:1017px;top:611px">1</b><b class="d" style="left:923px;top:601px">0</b><b class="d" style="left:911px;top:567px">0</b><i class="dot" style="left:919px;top:575px"></i><b class="d" style="left:923px;top:567px">5</b><b class="d" style="left:923px;top:532px">1</b><i style="left:978px;top:639px;width:1px;height:1px;background:#000"></i><i style="left:1062px;top:537px;width:87px;height:69px;background:#fff"></i><i style="left:1061px;top:537px;width:1px;height:70px;background:#000"></i><i style="left:1061px;top:606px;width:88px;height:1px;background:#000"></i><i style="left:1148px;top:605px;width:1px;height:1px;background:#000"></i><b class="d" style="left:1058px;top:611px">0</b><i style="left:1104px;top:605px;width:1px;height:1px;background:#000"></i><b class="d" style="left:1095px;top:611px">0</b><i class="dot" style="left:1103px;top:619px"></i><b class="d" style="left:1107px;top:611px">5</b><b class="d" style="left:1145px;top:611px">1</b><b class="d" style="left:1051px;top:601px">0</b><b class="d" style="left:1039px;top:567px">0</b><i class="dot" style="left:1047px;top:575px"></i><b class="d" style="left:1051px;top:567px">5</b><b class="d" style="left:1051px;top:532px">1</b><i style="left:1106px;top:639px;width:1px;height:1px;background:#000"></i><i style="left:167px;top:666px;width:87px;height:70px;background:#fff"></i><i style="left:166px;top:666px;width:1px;height:71px;background:#000"></i><i style="left:166px;top:736px;width:88px;height:1px;background:#000"></i><i style="left:253px;top:735px;width:1px;height:1px;background:#000"></i><b class="d" style="left:163px;top:741px">0</b><i style="left:209px;top:735px;width:1px;height:1px;background:#000"></i><b class="d" style="left:200px;top:741px">0</b><i class="dot" style="left:208px;top:749px"></i><b class="d" style="left:212px;top:741px">5</b><b class="d" style="left:250px;top:741px">1</b><b class="d" style="left:156px;top:731px">0</b><b class="d" style="left:144px;top:696px">0</b><i class="dot" style="left:152px;top:704px"></i><b class="d" style="left:156px;top:696px">5</b><b class="d" style="left:156px;top:661px">1</b><i style="left:211px;top:769px;width:1px;height:1px;background:#000"></i><i style="left:294px;top:666px;width:88px;height:71px;background:#000"></i><i style="left:295px;top:667px;width:86px;height:69px;background:#fff"></i><b class="d" style="left:291px;top:741px">0</b><i style="left:337px;top:735px;width:1px;height:1px;background:#000"></i><b class="d" style="left:334px;top:741px">5</b><b class="d" style="left:375px;top:741px">1</b><b class="d" style="left:381px;top:741px">0</b><b class="d" style="left:284px;top:731px">0</b><i style="left:380px;top:713px;width:1px;height:1px;background:#000"></i><b class="d" style="left:278px;top:708px">2</b><b class="d" style="left:284px;top:708px">0</b><i style="left:380px;top:689px;width:1px;height:1px;background:#000"></i><b class="d" style="left:278px;top:684px">4</b><b class="d" style="left:284px;top:684px">0</b><b class="d" style="left:278px;top:661px">6</b><b class="d" style="left:284px;top:661px">0</b><b style="left:294px;top:651px">G</b><b style="left:300px;top:651px">L</b><b style="left:306px;top:651px">N</b><b style="left:318px;top:651px">L</b><b class="d" style="left:324px;top:650px">2</b><b class="d" style="left:336px;top:650px">1</b><b class="d" style="left:342px;top:650px">0</b><i class="m" style="left:354px;top:654px"></i><i class="col" style="left:362px;top:654px"></i><b class="d" style="left:372px;top:650px">5</b><b class="d" style="left:375px;top:757px">4</b><b style="left:350px;top:769px">x</b><b class="d" style="left:363px;top:768px">1</b><b class="d" style="left:369px;top:768px">0</b><i style="left:422px;top:666px;width:87px;height:71px;background:#000"></i><i style="left:423px;top:667px;width:85px;height:69px;background:#fff"></i><b class="d" style="left:419px;top:741px">0</b><i style="left:465px;top:735px;width:1px;height:1px;background:#000"></i><b class="d" style="left:462px;top:741px">5</b><b class="d" style="left:502px;top:741px">1</b><b class="d" style="left:508px;top:741px">0</b><b class="d" style="left:412px;top:731px">0</b><i style="left:507px;top:713px;width:1px;height:1px;background:#000"></i><b class="d" style="left:406px;top:708px">2</b><b class="d" style="left:412px;top:708px">0</b><i style="left:507px;top:689px;width:1px;height:1px;background:#000"></i><b class="d" style="left:406px;top:684px">4</b><b class="d" style="left:412px;top:684px">0</b><b class="d" style="left:406px;top:661px">6</b><b class="d" style="left:412px;top:661px">0</b><b style="left:422px;top:651px">G</b><b style="left:428px;top:651px">L</b><b style="left:434px;top:651px">N</b><b style="left:446px;top:651px">L</b><b class="d" style="left:452px;top:650px">2</b><b class="d" style="left:464px;top:650px">1</b><b class="d" style="left:470px;top:650px">1</b><i class="m" style="left:482px;top:654px"></i><i class="col" style="left:490px;top:654px"></i><b class="d" style="left:500px;top:650px">6</b><b class="d" style="left:502px;top:757px">4</b><b style="left:477px;top:769px">x</b><b class="d" style="left:490px;top:768px">1</b><b class="d" style="left:496px;top:768px">0</b><i style="left:550px;top:666px;width:87px;height:71px;background:#000"></i><i style="left:551px;top:667px;width:85px;height:69px;background:#fff"></i><b class="d" style="left:547px;top:741px">0</b><i style="left:593px;top:735px;width:1px;height:1px;background:#000"></i><b class="d" style="left:590px;top:741px">5</b><b class="d" style="left:630px;top:741px">1</b><b class="d" style="left:636px;top:741px">0</b><b class="d" style="left:540px;top:731px">0</b><i style="left:635px;top:713px;width:1px;height:1px;background:#000"></i><b class="d" style="left:534px;top:708px">2</b><b class="d" style="left:540px;top:708px">0</b><i style="left:635px;top:689px;width:1px;height:1px;background:#000"></i><b class="d" style="left:534px;top:684px">4</b><b class="d" style="left:540px;top:684px">0</b><b class="d" style="left:534px;top:661px">6</b><b class="d" style="left:540px;top:661px">0</b><b style="left:550px;top:651px">G</b><b style="left:556px;top:651px">L</b><b style="left:562px;top:651px">N</b><b style="left:574px;top:651px">L</b><b class="d" style="left:580px;top:650px">2</b><b class="d" style="left:592px;top:650px">1</b><b class="d" style="left:598px;top:650px">2</b><i class="m" style="left:610px;top:654px"></i><i class="col" style="left:618px;top:654px"></i><b class="d" style="left:628px;top:650px">6</b><b class="d" style="left:630px;top:757px">4</b><b style="left:605px;top:769px">x</b><b class="d" style="left:618px;top:768px">1</b><b class="d" style="left:624px;top:768px">0</b><i style="left:678px;top:666px;width:87px;height:71px;background:#000"></i><i style="left:679px;top:667px;width:85px;height:69px;background:#fff"></i><b class="d" style="left:675px;top:741px">0</b><b class="d" style="left:761px;top:741px">5</b><b class="d" style="left:668px;top:731px">0</b><i style="left:763px;top:713px;width:1px;height:1px;background:#000"></i><b class="d" style="left:662px;top:708px">2</b><b class="d" style="left:668px;top:708px">0</b><i style="left:763px;top:689px;width:1px;height:1px;background:#000"></i><b class="d" style="left:662px;top:684px">4</b><b class="d" style="left:668px;top:684px">0</b><b class="d" style="left:662px;top:661px">6</b><b class="d" style="left:668px;top:661px">0</b><b style="left:678px;top:651px">G</b><b style="left:684px;top:651px">L</b><b style="left:690px;top:651px">N</b><b style="left:702px;top:651px">L</b><b class="d" style="left:708px;top:650px">2</b><b class="d" style="left:720px;top:650px">1</b><b class="d" style="left:726px;top:650px">3</b><i class="m" style="left:738px;top:654px"></i><i class="col" style="left:746px;top:654px"></i><b class="d" style="left:756px;top:650px">6</b><b class="d" style="left:758px;top:757px">4</b><b style="left:733px;top:769px">x</b><b class="d" style="left:746px;top:768px">1</b><b class="d" style="left:752px;top:768px">0</b><i style="left:807px;top:666px;width:86px;height:70px;background:#fff"></i><i style="left:806px;top:666px;width:1px;height:71px;background:#000"></i><i style="left:806px;top:736px;width:87px;height:1px;background:#000"></i><i style="left:892px;top:735px;width:1px;height:1px;background:#000"></i><b class="d" style="left:803px;top:741px">0</b><i style="left:849px;top:735px;width:1px;height:1px;background:#000"></i><b class="d" style="left:840px;top:741px">0</b><i class="dot" style="left:848px;top:749px"></i><b class="d" style="left:852px;top:741px">5</b><b class="d" style="left:889px;top:741px">1</b><b class="d" style="left:796px;top:731px">0</b><b class="d" style="left:784px;top:696px">0</b><i class="dot" style="left:792px;top:704px"></i><b class="d" style="left:796px;top:696px">5</b><b class="d" style="left:796px;top:661px">1</b><i style="left:851px;top:769px;width:1px;height:1px;background:#000"></i><i style="left:934px;top:666px;width:87px;height:70px;background:#fff"></i><i style="left:933px;top:666px;width:1px;height:71px;background:#000"></i><i style="left:933px;top:736px;width:88px;height:1px;background:#000"></i><i style="left:1020px;top:735px;width:1px;height:1px;background:#000"></i><b class="d" style="left:930px;top:741px">0</b><i style="left:976px;top:735px;width:1px;height:1px;background:#000"></i><b class="d" style="left:967px;top:741px">0</b><i class="dot" style="left:975px;top:749px"></i><b class="d" style="left:979px;top:741px">5</b><b class="d" style="left:1017px;top:741px">1</b><b class="d" style="left:923px;top:731px">0</b><b class="d" style="left:911px;top:696px">0</b><i class="dot" style="left:919px;top:704px"></i><b class="d" style="left:923px;top:696px">5</b><b class="d" style="left:923px;top:661px">1</b><i style="left:978px;top:769px;width:1px;height:1px;background:#000"></i><i style="left:1062px;top:666px;width:87px;height:70px;background:#fff"></i><i style="left:1061px;top:666px;width:1px;height:71px;background:#000"></i><i style="left:1061px;top:736px;width:88px;height:1px;background:#000"></i><i style="left:1148px;top:735px;width:1px;height:1px;background:#000"></i><b class="d" style="left:1058px;top:741px">0</b><i style="left:1104px;top:735px;width:1px;height:1px;background:#000"></i><b class="d" style="left:1095px;top:741px">0</b><i class="dot" style="left:1103px;top:749px"></i><b class="d" style="left:1107px;top:741px">5</b><b class="d" style="left:1145px;top:741px">1</b><b class="d" style="left:1051px;top:731px">0</b><b class="d" style="left:1039px;top:696px">0</b><i class="dot" style="left:1047px;top:704px"></i><b class="d" style="left:1051px;top:696px">5</b><b class="d" style="left:1051px;top:661px">1</b><i style="left:1106px;top:769px;width:1px;height:1px;background:#000"></i><i style="left:167px;top:796px;width:87px;height:69px;background:#fff"></i><i style="left:166px;top:796px;width:1px;height:70px;background:#000"></i><i style="left:166px;top:865px;width:88px;height:1px;background:#000"></i><i style="left:253px;top:864px;width:1px;height:1px;background:#000"></i><b class="d" style="left:163px;top:870px">0</b><i style="left:209px;top:864px;width:1px;height:1px;background:#000"></i><b class="d" style="left:200px;top:870px">0</b><i class="dot" style="left:208px;top:878px"></i><b class="d" style="left:212px;top:870px">5</b><b class="d" style="left:250px;top:870px">1</b><b class="d" style="left:156px;top:860px">0</b><b class="d" style="left:144px;top:825px">0</b><i class="dot" style="left:152px;top:833px"></i><b class="d" style="left:156px;top:825px">5</b><b class="d" style="left:156px;top:791px">1</b><i style="left:211px;top:898px;width:1px;height:1px;background:#000"></i><i style="left:295px;top:796px;width:87px;height:69px;background:#fff"></i><i style="left:294px;top:796px;width:1px;height:70px;background:#000"></i><i style="left:294px;top:865px;width:88px;height:1px;background:#000"></i><i style="left:381px;top:864px;width:1px;height:1px;background:#000"></i><b class="d" style="left:291px;top:870px">0</b><i style="left:337px;top:864px;width:1px;height:1px;background:#000"></i><b class="d" style="left:328px;top:870px">0</b><i class="dot" style="left:336px;top:878px"></i><b class="d" style="left:340px;top:870px">5</b><b class="d" style="left:378px;top:870px">1</b><b class="d" style="left:284px;top:860px">0</b><b class="d" style="left:272px;top:825px">0</b><i class="dot" style="left:280px;top:833px"></i><b class="d" style="left:284px;top:825px">5</b><b class="d" style="left:284px;top:791px">1</b><i style="left:339px;top:898px;width:1px;height:1px;background:#000"></i><i style="left:422px;top:796px;width:87px;height:70px;background:#000"></i><i style="left:423px;top:797px;width:85px;height:68px;background:#fff"></i><b class="d" style="left:419px;top:870px">0</b><b class="d" style="left:505px;top:870px">5</b><b class="d" style="left:412px;top:860px">0</b><i style="left:507px;top:830px;width:1px;height:1px;background:#000"></i><b class="d" style="left:406px;top:825px">2</b><b class="d" style="left:412px;top:825px">0</b><b class="d" style="left:406px;top:791px">4</b><b class="d" style="left:412px;top:791px">0</b><b style="left:422px;top:781px">G</b><b style="left:428px;top:781px">L</b><b style="left:434px;top:781px">N</b><b style="left:446px;top:781px">L</b><b class="d" style="left:452px;top:780px">2</b><b class="d" style="left:464px;top:780px">1</b><b class="d" style="left:470px;top:780px">9</b><i class="m" style="left:482px;top:784px"></i><i class="col" style="left:490px;top:784px"></i><b class="d" style="left:500px;top:780px">4</b><b class="d" style="left:502px;top:886px">4</b><b style="left:477px;top:898px">x</b><b class="d" style="left:490px;top:897px">1</b><b class="d" style="left:496px;top:897px">0</b><i style="left:551px;top:796px;width:86px;height:69px;background:#fff"></i><i style="left:550px;top:796px;width:1px;height:70px;background:#000"></i><i style="left:550px;top:865px;width:87px;height:1px;background:#000"></i><i style="left:636px;top:864px;width:1px;height:1px;background:#000"></i><b class="d" style="left:547px;top:870px">0</b><i style="left:593px;top:864px;width:1px;height:1px;background:#000"></i><b class="d" style="left:584px;top:870px">0</b><i class="dot" style="left:592px;top:878px"></i><b class="d" style="left:596px;top:870px">5</b><b class="d" style="left:633px;top:870px">1</b><b class="d" style="left:540px;top:860px">0</b><b class="d" style="left:528px;top:825px">0</b><i class="dot" style="left:536px;top:833px"></i><b class="d" style="left:540px;top:825px">5</b><b class="d" style="left:540px;top:791px">1</b><i style="left:595px;top:898px;width:1px;height:1px;background:#000"></i><i style="left:679px;top:796px;width:86px;height:69px;background:#fff"></i><i style="left:678px;top:796px;width:1px;height:70px;background:#000"></i><i style="left:678px;top:865px;width:87px;height:1px;background:#000"></i><i style="left:764px;top:864px;width:1px;height:1px;background:#000"></i><b class="d" style="left:675px;top:870px">0</b><i style="left:721px;top:864px;width:1px;height:1px;background:#000"></i><b class="d" style="left:712px;top:870px">0</b><i class="dot" style="left:720px;top:878px"></i><b class="d" style="left:724px;top:870px">5</b><b class="d" style="left:761px;top:870px">1</b><b class="d" style="left:668px;top:860px">0</b><b class="d" style="left:656px;top:825px">0</b><i class="dot" style="left:664px;top:833px"></i><b class="d" style="left:668px;top:825px">5</b><b class="d" style="left:668px;top:791px">1</b><i style="left:723px;top:898px;width:1px;height:1px;background:#000"></i><i style="left:807px;top:796px;width:86px;height:69px;background:#fff"></i><i style="left:806px;top:796px;width:1px;height:70px;background:#000"></i><i style="left:806px;top:865px;width:87px;height:1px;background:#000"></i><i style="left:892px;top:864px;width:1px;height:1px;background:#000"></i><b class="d" style="left:803px;top:870px">0</b><i style="left:849px;top:864px;width:1px;height:1px;background:#000"></i><b class="d" style="left:840px;top:870px">0</b><i class="dot" style="left:848px;top:878px"></i><b class="d" style="left:852px;top:870px">5</b><b class="d" style="left:889px;top:870px">1</b><b class="d" style="left:796px;top:860px">0</b><b class="d" style="left:784px;top:825px">0</b><i class="dot" style="left:792px;top:833px"></i><b class="d" style="left:796px;top:825px">5</b><b class="d" style="left:796px;top:791px">1</b><i style="left:851px;top:898px;width:1px;height:1px;background:#000"></i><i style="left:933px;top:796px;width:88px;height:70px;background:#000"></i><i style="left:934px;top:797px;width:86px;height:68px;background:#fff"></i><b class="d" style="left:930px;top:870px">0</b><i style="left:976px;top:864px;width:1px;height:1px;background:#000"></i><b class="d" style="left:970px;top:870px">1</b><b class="d" style="left:976px;top:870px">0</b><b class="d" style="left:1014px;top:870px">2</b><b class="d" style="left:1020px;top:870px">0</b><b class="d" style="left:923px;top:860px">0</b><i style="left:1019px;top:842px;width:1px;height:1px;background:#000"></i><b class="d" style="left:917px;top:837px">2</b><b class="d" style="left:923px;top:837px">0</b><i style="left:1019px;top:819px;width:1px;height:1px;background:#000"></i><b class="d" style="left:917px;top:814px">4</b><b class="d" style="left:923px;top:814px">0</b><b class="d" style="left:917px;top:791px">6</b><b class="d" style="left:923px;top:791px">0</b><b style="left:933px;top:781px">G</b><b style="left:939px;top:781px">L</b><b style="left:945px;top:781px">N</b><b style="left:957px;top:781px">L</b><b class="d" style="left:963px;top:780px">2</b><b class="d" style="left:975px;top:780px">2</b><b class="d" style="left:981px;top:780px">3</b><i class="m" style="left:993px;top:784px"></i><i class="col" style="left:1001px;top:784px"></i><b class="d" style="left:1011px;top:780px">5</b><i style="left:1062px;top:796px;width:87px;height:69px;background:#fff"></i><i style="left:1061px;top:796px;width:1px;height:70px;background:#000"></i><i style="left:1061px;top:865px;width:88px;height:1px;background:#000"></i><i style="left:1148px;top:864px;width:1px;height:1px;background:#000"></i><b class="d" style="left:1058px;top:870px">0</b><i style="left:1104px;top:864px;width:1px;height:1px;background:#000"></i><b class="d" style="left:1095px;top:870px">0</b><i class="dot" style="left:1103px;top:878px"></i><b class="d" style="left:1107px;top:870px">5</b><b class="d" style="left:1145px;top:870px">1</b><b class="d" style="left:1051px;top:860px">0</b><b class="d" style="left:1039px;top:825px">0</b><i class="dot" style="left:1047px;top:833px"></i><b class="d" style="left:1051px;top:825px">5</b><b class="d" style="left:1051px;top:791px">1</b><i style="left:1106px;top:898px;width:1px;height:1px;background:#000"></i></div>
<svg style="position:absolute;left:0;top:0" width="1280" height="984" viewBox="0 0 1280 984" shape-rendering="crispEdges"><clipPath id="c01"><rect x="294" y="149" width="87" height="69"/></clipPath><g clip-path="url(#c01)" fill="#0000ff"><polygon points="294.4,158.7 295.9,156.7 297.5,155.1 299.9,157.5 301.5,161.0 301.9,161.8 301.9,171.0 300.7,171.0 299.5,167.0 298.7,162.6 297.1,163.8 295.9,167.8 294.4,169.4"/><polygon points="307.8,159.1 309.0,157.1 311.0,157.5 313.0,158.3 315.4,157.9 315.8,161.8 317.7,163.0 317.7,170.2 316.2,169.4 313.8,167.8 313.0,171.0 311.4,174.1 310.2,175.7 309.0,174.9 308.2,174.1"/><polygon points="320.9,162.2 322.1,158.3 324.1,155.5 327.3,151.9 328.8,153.9 330.4,151.9 332.4,150.3 333.2,153.9 335.2,154.7 336.8,158.3 337.6,159.9 338.8,160.3 338.8,171.7 336.0,171.7 333.2,170.2 332.8,167.0 332.0,167.0 331.2,170.2 330.4,166.2 329.6,171.7 328.8,164.6 328.0,163.8 327.3,169.4 324.9,169.4 324.1,171.0 322.1,171.0"/><polygon points="341.9,167.8 343.1,163.0 344.7,162.2 344.7,168.6 343.5,171.7 342.3,171.7"/><rect x="294.1" y="158.7" width="1.0" height="45.6"/><rect x="301.0" y="161.0" width="1.0" height="57.5"/><rect x="304.9" y="182.0" width="1.0" height="36.5"/><rect x="307.9" y="159.1" width="1.0" height="42.8"/><rect x="316.8" y="163.0" width="1.0" height="55.5"/><rect x="320.5" y="162.2" width="1.6" height="56.3"/><rect x="324.0" y="171.0" width="1.0" height="8.7"/><rect x="327.1" y="163.8" width="1.0" height="43.6"/><rect x="326.1" y="207.4" width="1.0" height="11.1"/><rect x="337.4" y="171.7" width="1.6" height="46.8"/><rect x="338.8" y="189.2" width="1.6" height="7.1"/><rect x="340.7" y="182.0" width="2.0" height="36.5"/><rect x="341.8" y="167.8" width="1.0" height="50.7"/><rect x="301.1" y="183.6" width="2.5" height="34.9"/><rect x="317.0" y="182.0" width="5.2" height="36.5"/><rect x="303.9" y="193.1" width="1.2" height="4.0"/><rect x="305.9" y="189.6" width="2.4" height="1.2"/></g><clipPath id="c02"><rect x="422" y="149" width="86" height="69"/></clipPath><g clip-path="url(#c02)" fill="#0000ff"><polygon points="425.1,163.0 425.9,155.9 427.5,155.1 429.1,156.3 431.9,155.9 432.3,159.1 433.5,159.5 433.5,172.9 432.3,172.9 431.9,166.2 430.7,165.4 429.9,165.8 429.1,164.6 427.9,165.4 427.5,171.0 425.9,171.0"/><polygon points="437.0,164.2 438.2,157.9 441.0,157.9 441.8,155.9 444.6,153.1 445.7,155.1 446.9,157.1 448.9,158.3 449.1,170.2 449.9,170.6 449.9,174.9 448.5,174.9 447.7,167.0 446.5,167.8 445.7,164.2 445.0,169.8 443.8,169.4 443.0,165.4 441.8,165.4 441.0,168.6 439.4,171.0 438.8,175.7 437.8,175.7 437.4,182.0 437.0,182.0"/><polygon points="453.3,159.5 455.3,158.3 456.0,154.3 459.2,153.9 461.6,153.5 464.8,151.1 466.4,154.3 467.5,153.9 468.7,158.3 470.3,158.3 471.9,161.0 471.9,174.9 470.3,174.9 469.9,167.0 467.9,167.0 466.4,165.8 466.0,171.3 464.0,171.7 463.6,167.8 461.6,166.6 461.2,168.6 459.6,169.8 458.0,169.8 456.8,170.2 456.4,172.9 455.3,174.9 454.5,174.9 453.7,182.0"/><rect x="425.0" y="163.0" width="1.0" height="19.8"/><rect x="432.9" y="167.0" width="1.0" height="51.5"/><rect x="435.8" y="182.0" width="1.6" height="36.5"/><rect x="436.9" y="163.8" width="1.0" height="43.6"/><rect x="449.2" y="174.9" width="1.0" height="43.6"/><rect x="450.9" y="181.3" width="1.0" height="37.3"/><rect x="453.3" y="159.1" width="1.6" height="59.5"/><rect x="457.9" y="169.8" width="1.0" height="15.9"/><rect x="471.1" y="174.9" width="2.0" height="43.6"/><rect x="423.8" y="182.8" width="2.0" height="35.7"/><rect x="433.9" y="190.8" width="2.4" height="1.2"/><rect x="449.7" y="191.6" width="2.0" height="1.2"/><rect x="451.7" y="189.2" width="2.0" height="1.2"/></g><clipPath id="c03"><rect x="550" y="149" width="86" height="69"/></clipPath><g clip-path="url(#c03)" fill="#0000ff"><polygon points="550.4,162.2 551.5,163.8 551.9,170.2 552.7,170.2 552.7,178.1 550.9,178.1"/><polygon points="556.1,161.0 557.1,158.3 560.1,158.1 560.7,155.9 561.9,158.3 564.9,159.1 564.9,167.8 563.0,167.8 561.9,169.8 561.1,165.8 560.1,167.8 559.1,169.8 557.9,169.4 557.5,167.0 556.7,166.2"/><polygon points="569.0,163.0 570.6,160.6 573.0,158.3 576.5,155.1 578.5,158.7 580.1,160.3 582.5,161.4 582.5,171.7 580.9,172.1 580.1,170.6 578.5,170.2 577.7,175.7 577.3,171.0 576.9,164.6 575.7,165.4 574.5,167.0 573.3,170.2 571.8,170.2 570.6,169.4 569.8,169.4"/><polygon points="587.2,161.4 588.8,159.9 591.2,158.3 591.6,155.1 593.6,157.9 595.1,155.1 599.9,155.1 600.7,159.1 600.7,164.6 598.7,166.6 598.3,168.6 595.9,169.4 595.5,172.5 594.8,173.3 593.6,167.8 592.0,166.2 590.4,167.0 588.8,170.2 588.8,177.3 587.6,177.3"/><rect x="550.1" y="162.2" width="1.0" height="56.3"/><rect x="551.7" y="170.2" width="1.0" height="48.4"/><rect x="552.7" y="189.2" width="1.6" height="3.2"/><rect x="554.7" y="182.0" width="1.6" height="36.5"/><rect x="555.9" y="161.0" width="1.0" height="57.5"/><rect x="564.0" y="159.1" width="1.0" height="57.5"/><rect x="567.8" y="182.0" width="1.6" height="36.5"/><rect x="568.9" y="163.0" width="1.0" height="46.0"/><rect x="581.9" y="161.4" width="1.0" height="57.1"/><rect x="582.5" y="183.6" width="1.6" height="7.1"/><rect x="584.9" y="182.8" width="1.0" height="35.7"/><rect x="586.9" y="161.4" width="1.0" height="57.1"/><rect x="594.0" y="169.4" width="1.0" height="15.5"/><rect x="584.8" y="190.0" width="2.4" height="6.3"/><line x1="551.2" y1="218.1" x2="593.6" y2="167.8" stroke="#0000ff" stroke-width="1"/><line x1="551.9" y1="216.5" x2="569.0" y2="198.7" stroke="#0000ff" stroke-width="1"/></g><clipPath id="c04"><rect x="678" y="149" width="86" height="69"/></clipPath><g clip-path="url(#c04)" fill="#0000ff"><polygon points="678.4,155.9 679.2,158.3 680.7,159.5 681.1,163.0 682.9,163.0 682.9,173.3 683.9,173.3 683.9,175.7 682.3,175.7 681.9,171.0 680.7,170.2 679.5,167.8 678.8,167.8"/><polygon points="687.1,162.2 689.1,161.8 689.5,159.1 691.0,159.1 691.4,160.6 693.4,158.3 695.0,159.5 695.4,162.2 697.0,162.2 697.0,182.8 696.2,171.7 695.0,171.7 694.2,170.2 693.4,167.0 692.6,171.7 691.8,170.2 690.6,170.6 689.9,167.8 689.1,172.5 687.9,173.3"/><polygon points="700.2,167.4 701.3,164.2 702.1,161.0 703.3,154.3 704.5,153.1 705.7,153.1 706.1,155.9 708.1,155.9 708.5,153.9 710.5,151.9 712.0,153.9 712.8,158.3 714.4,158.3 715.9,160.6 715.9,178.9 714.8,169.4 713.2,167.0 712.4,169.8 710.9,169.8 710.5,177.7 710.1,169.8 708.9,172.5 707.3,172.5 706.5,166.2 705.7,173.7 704.5,182.8 703.7,182.0 702.9,171.7 701.7,173.3 700.8,174.1"/><polygon points="721.2,163.4 723.1,158.3 724.7,157.9 725.5,155.1 726.7,153.9 727.1,158.3 728.3,165.0 728.7,175.7 727.9,171.0 727.1,170.2 726.3,166.2 725.1,169.0 724.3,172.5 723.5,169.4 722.4,169.4 721.6,172.5"/><rect x="678.1" y="155.9" width="1.0" height="48.4"/><rect x="683.0" y="173.3" width="1.0" height="45.2"/><rect x="685.0" y="182.0" width="1.0" height="36.5"/><rect x="687.1" y="162.2" width="1.0" height="56.3"/><rect x="695.8" y="171.7" width="1.6" height="44.8"/><rect x="697.1" y="182.8" width="1.0" height="30.9"/><rect x="700.0" y="167.0" width="1.0" height="51.5"/><rect x="717.9" y="155.9" width="1.0" height="60.2"/><rect x="720.1" y="171.7" width="1.6" height="42.8"/><rect x="683.5" y="197.1" width="1.6" height="5.5"/><rect x="685.9" y="193.9" width="1.7" height="1.6"/><rect x="697.0" y="182.8" width="2.4" height="16.6"/><rect x="716.0" y="182.0" width="2.8" height="34.1"/><rect x="715.9" y="178.1" width="1.7" height="40.4"/></g><clipPath id="c11"><rect x="294" y="279" width="87" height="68"/></clipPath><g clip-path="url(#c11)" fill="#0000ff"><polygon points="294.4,287.5 295.5,286.7 297.5,287.1 297.9,288.3 301.1,287.9 301.5,286.7 301.9,290.6 303.1,293.0 303.9,295.4 305.9,296.2 305.9,312.0 305.1,304.1 303.9,303.3 302.7,301.0 302.3,304.9 301.9,314.8 301.1,314.8 301.1,304.1 299.9,304.9 299.5,301.0 298.7,301.0 297.9,303.3 297.5,309.7 297.1,305.7 295.9,305.7 295.5,300.2 294.8,300.2"/><polygon points="308.2,297.0 309.0,293.0 311.0,292.6 312.2,289.9 313.8,290.6 315.0,295.0 316.2,289.9 317.0,295.0 319.7,295.4 320.5,297.8 321.7,302.1 321.7,343.8 320.9,340.6 320.1,312.0 319.3,310.5 318.5,308.1 317.7,304.1 316.2,302.9 314.6,301.0 313.8,305.7 313.0,305.7 312.6,302.1 311.8,304.1 311.0,301.3 310.2,301.0 309.4,304.9 308.6,305.3"/><polygon points="326.1,293.8 328.0,292.2 329.2,290.3 330.0,292.2 330.8,291.0 332.8,291.0 333.6,292.2 333.6,299.4 332.8,299.4 331.2,301.0 330.4,302.9 329.6,301.0 328.0,301.3 326.9,302.5"/><polygon points="338.0,298.6 339.1,295.0 341.1,292.2 342.7,292.6 343.5,291.8 344.7,292.2 344.7,299.8 342.7,300.2 341.9,305.7 341.1,302.5 340.3,303.7 339.9,307.7 338.8,307.7"/><rect x="294.1" y="287.1" width="1.0" height="52.7"/><rect x="305.2" y="296.2" width="1.0" height="51.5"/><rect x="308.1" y="297.0" width="1.0" height="50.7"/><rect x="320.8" y="302.1" width="1.0" height="42.4"/><rect x="325.9" y="293.8" width="1.0" height="38.8"/><rect x="332.9" y="292.2" width="1.0" height="55.5"/><rect x="338.0" y="298.6" width="1.0" height="40.4"/><rect x="305.1" y="312.0" width="2.0" height="35.7"/><rect x="305.9" y="323.9" width="2.8" height="5.5"/><rect x="321.7" y="323.1" width="2.4" height="1.6"/><rect x="324.1" y="310.5" width="2.4" height="37.3"/><rect x="334.0" y="315.6" width="2.0" height="2.0"/><rect x="336.0" y="310.1" width="2.4" height="37.7"/></g><clipPath id="c12"><rect x="422" y="279" width="86" height="68"/></clipPath><g clip-path="url(#c12)" fill="#0000ff"><polygon points="422.4,293.0 424.3,289.1 425.9,290.3 425.9,297.8 427.1,297.8 427.5,291.0 427.9,298.6 429.1,298.6 429.1,294.6 430.7,295.0 431.5,291.0 434.6,289.1 435.0,293.0 436.6,295.0 437.8,299.4 437.8,317.6 437.0,317.6 437.0,304.1 435.8,304.1 435.4,313.6 433.9,313.6 433.1,309.7 432.3,310.1 431.5,313.6 430.7,307.3 429.9,307.3 429.9,347.7 429.1,347.7 428.3,344.6 427.9,329.9 426.7,329.9 426.7,343.0 425.9,342.2 425.9,320.0 424.7,318.4 424.3,316.0 423.5,301.0 422.8,301.0"/><polygon points="445.0,283.1 446.1,283.9 446.9,285.9 448.1,285.5 449.7,287.5 450.5,290.3 451.7,290.3 451.7,299.4 450.1,297.8 448.5,295.8 446.5,295.0 445.7,295.0"/><polygon points="453.3,344.6 455.3,332.7 456.8,328.7 457.6,329.5 457.6,339.0 456.8,339.0 456.0,333.5 454.9,341.4"/><polygon points="456.8,298.6 458.4,293.0 459.6,293.4 460.4,296.2 462.4,292.2 464.0,293.8 465.6,295.4 465.6,304.1 464.4,303.7 462.4,303.7 461.2,302.1 460.8,305.7 459.6,304.9 458.0,305.3"/><polygon points="469.1,290.6 470.7,289.1 471.5,285.5 472.7,285.1 472.7,297.0 471.9,297.4 471.9,309.7 471.1,309.7 470.7,298.6 469.5,299.4"/><rect x="422.1" y="293.0" width="1.0" height="47.6"/><rect x="438.8" y="317.6" width="1.2" height="2.0"/><rect x="439.9" y="311.3" width="1.0" height="36.5"/><rect x="444.0" y="312.8" width="1.0" height="34.9"/><rect x="444.9" y="283.1" width="1.0" height="57.5"/><rect x="450.8" y="290.3" width="1.0" height="52.7"/><rect x="452.9" y="287.1" width="1.0" height="57.5"/><rect x="456.9" y="298.6" width="1.0" height="40.4"/><rect x="465.0" y="295.4" width="1.0" height="43.6"/><rect x="469.0" y="290.6" width="1.0" height="57.1"/><rect x="432.7" y="313.6" width="2.4" height="34.1"/><rect x="441.0" y="315.2" width="3.2" height="1.2"/><rect x="451.3" y="320.0" width="2.4" height="4.0"/><rect x="465.2" y="312.0" width="1.6" height="27.0"/><rect x="466.8" y="322.4" width="2.4" height="1.6"/></g><clipPath id="c13"><rect x="550" y="279" width="86" height="68"/></clipPath><g clip-path="url(#c13)" fill="#0000ff"><polygon points="555.1,293.0 556.3,289.1 557.1,285.1 557.9,285.5 558.3,287.9 559.1,285.1 560.7,285.9 561.1,289.9 563.0,287.1 565.0,284.3 566.6,285.1 567.4,288.7 568.2,292.2 569.4,295.0 569.8,308.1 569.0,308.1 567.8,301.0 566.6,303.3 565.4,304.9 565.0,324.7 563.8,324.7 563.4,316.8 562.6,317.6 562.3,299.4 561.5,301.0 560.7,299.4 560.1,300.2 559.9,336.6 559.1,336.6 559.1,312.8 557.9,312.8 557.5,302.5 556.7,301.0 555.9,297.8"/><polygon points="574.1,292.2 575.3,290.3 577.3,286.3 578.1,289.1 580.9,290.6 582.1,294.6 582.9,295.4 582.9,317.6 582.1,301.0 580.9,297.8 577.7,297.8 576.5,300.6 575.3,302.1"/><polygon points="589.2,291.0 590.4,286.3 591.6,289.1 595.1,288.7 596.3,288.3 597.1,295.0 597.9,295.4 597.7,315.6 597.1,301.7 593.2,301.7 592.8,298.2 591.6,300.2 590.8,302.9 589.8,302.9"/><rect x="552.0" y="310.9" width="1.0" height="32.9"/><rect x="554.0" y="310.9" width="1.0" height="36.9"/><rect x="554.7" y="293.0" width="1.6" height="46.8"/><rect x="568.9" y="295.0" width="1.0" height="22.6"/><rect x="573.9" y="292.2" width="1.0" height="55.5"/><rect x="581.9" y="295.4" width="1.0" height="22.2"/><rect x="588.9" y="291.0" width="1.0" height="53.5"/><rect x="552.7" y="314.8" width="1.6" height="1.2"/><line x1="569.4" y1="317.6" x2="574.1" y2="321.6" stroke="#0000ff" stroke-width="1"/><line x1="582.5" y1="317.6" x2="589.2" y2="323.9" stroke="#0000ff" stroke-width="1"/></g><clipPath id="c14"><rect x="678" y="279" width="86" height="68"/></clipPath><g clip-path="url(#c14)" fill="#0000ff"><polygon points="680.2,293.0 681.9,293.0 682.7,295.0 683.1,299.8 683.9,300.2 683.9,317.2 682.7,317.2 681.9,312.0 681.1,312.0 680.7,308.9"/><polygon points="689.1,287.1 690.3,287.9 692.2,287.9 692.6,285.9 693.0,302.1 691.8,301.7 691.0,301.0 689.5,301.0"/><polygon points="706.9,291.0 708.5,289.1 711.3,290.6 712.8,293.0 713.6,295.4 713.6,304.9 712.8,304.9 712.0,301.0 710.9,299.4 709.7,301.7 708.1,301.7"/><polygon points="722.0,289.5 723.5,287.9 724.7,289.1 725.9,287.9 727.9,287.9 728.7,293.0 729.1,299.8 727.9,299.8 727.7,303.7 727.0,303.7 726.3,299.8 725.9,306.5 724.3,306.5 723.9,299.4 722.8,299.0"/><rect x="680.0" y="293.0" width="1.0" height="54.7"/><rect x="682.0" y="312.0" width="1.0" height="30.9"/><rect x="688.9" y="287.1" width="1.0" height="49.5"/><rect x="692.1" y="285.9" width="1.0" height="29.3"/><rect x="706.9" y="290.6" width="1.0" height="49.1"/><rect x="712.9" y="295.4" width="1.0" height="22.2"/><rect x="722.0" y="289.5" width="1.0" height="54.3"/><line x1="683.1" y1="317.2" x2="685.9" y2="318.0" stroke="#0000ff" stroke-width="1"/><line x1="685.9" y1="318.4" x2="689.5" y2="318.8" stroke="#0000ff" stroke-width="1"/><line x1="692.6" y1="315.2" x2="707.3" y2="320.4" stroke="#0000ff" stroke-width="1"/><line x1="713.4" y1="317.6" x2="722.0" y2="327.9" stroke="#0000ff" stroke-width="1"/></g><clipPath id="c21"><rect x="294" y="408" width="87" height="69"/></clipPath><g clip-path="url(#c21)" fill="#0000ff"><polygon points="310.2,419.3 311.0,415.3 313.0,414.9 313.4,420.8 314.2,417.3 315.4,414.1 317.7,414.9 318.1,420.0 319.7,422.8 321.7,419.3 323.3,419.6 324.9,417.7 326.5,414.1 328.8,412.1 329.6,418.9 330.4,421.2 331.2,412.9 332.8,412.1 333.2,415.7 334.4,410.1 335.6,413.3 337.6,412.1 339.9,412.5 341.5,413.3 343.9,414.1 345.5,416.1 347.1,415.7 350.2,415.3 353.4,415.3 356.6,416.9 359.8,418.1 362.1,417.3 363.7,419.6 366.1,421.6 368.5,421.2 370.1,420.0 372.4,422.0 372.4,445.8 371.6,431.5 369.7,431.5 369.3,439.9 368.5,431.1 366.1,431.5 364.5,428.8 362.9,426.8 359.8,426.4 357.4,427.6 355.8,426.4 353.4,424.4 350.2,424.8 349.5,426.8 347.9,426.4 345.5,430.0 344.7,426.8 343.1,427.6 340.7,425.2 339.1,425.2 338.4,430.7 337.6,426.8 336.8,430.7 336.0,426.8 334.4,426.0 333.6,430.0 332.8,422.8 332.0,424.4 330.4,432.7 329.2,426.4 328.0,418.9 327.3,419.6 325.7,423.6 324.1,427.6 322.5,426.0 320.9,426.0 319.7,429.6 318.1,427.6 317.3,424.4 315.8,422.0 314.6,427.6 313.8,430.3 312.6,424.4 311.4,422.8 310.8,422.8"/><rect x="310.0" y="418.9" width="1.2" height="54.7"/><rect x="368.8" y="430.7" width="1.0" height="9.1"/><rect x="371.9" y="422.0" width="1.0" height="23.8"/></g><clipPath id="c26"><rect x="933" y="408" width="87" height="69"/></clipPath><g clip-path="url(#c26)" fill="#0000ff"><polygon points="933.4,416.1 934.5,418.1 936.5,416.1 938.5,414.9 939.3,412.9 940.9,412.1 942.1,413.3 945.6,416.9 947.6,414.1 949.6,414.9 952.8,414.1 953.2,418.9 954.8,419.6 956.0,414.9 956.7,412.1 958.7,413.3 961.5,412.9 962.3,414.9 964.7,418.1 965.5,412.9 967.8,414.5 969.0,415.3 972.6,414.9 974.2,416.9 976.2,414.1 977.0,418.9 978.9,417.7 980.9,414.9 981.7,415.7 982.1,419.6 984.5,418.1 990.0,417.3 991.6,419.3 993.6,419.3 996.4,422.0 1000.3,418.1 1002.3,419.3 1003.9,419.3 1005.1,422.8 1006.3,421.2 1008.7,420.0 1009.1,424.8 1010.6,431.1 1010.6,444.6 1009.9,444.6 1009.5,433.1 1008.3,426.8 1005.9,426.8 1004.7,429.6 1003.1,426.0 1001.5,427.6 999.9,428.0 998.8,426.0 996.4,428.8 994.4,426.0 992.4,424.4 991.6,426.8 990.0,424.4 988.1,425.6 986.9,424.0 984.5,426.8 983.3,427.6 982.1,423.2 979.7,422.0 978.5,427.6 977.0,424.8 975.8,421.2 973.8,424.0 971.0,420.8 968.6,422.8 967.0,419.6 965.1,423.6 963.9,423.6 961.5,421.2 959.9,421.2 959.5,420.4 956.0,418.9 954.8,431.5 953.6,430.3 952.4,422.0 951.2,418.5 949.6,418.9 947.2,419.6 945.3,422.0 940.9,417.3 938.9,417.7 938.1,422.4 936.9,422.8 935.7,420.8 934.5,424.4 933.8,424.8"/><rect x="933.1" y="416.1" width="1.0" height="53.5"/></g><clipPath id="c31"><rect x="294" y="538" width="87" height="68"/></clipPath><g clip-path="url(#c31)" fill="#0000ff"><polygon points="294.4,550.8 295.5,550.0 297.5,548.1 298.7,548.5 299.9,550.0 300.3,552.8 301.5,555.2 301.9,564.7 300.3,565.9 299.9,560.0 298.7,559.2 297.9,556.8 297.1,556.4 296.7,560.7 295.9,560.7 295.2,560.0"/><polygon points="308.6,559.2 309.4,556.0 311.0,555.2 313.8,555.2 314.2,557.2 315.8,557.2 316.6,559.2 317.0,564.7 318.1,565.9 319.7,567.9 320.9,566.3 321.7,558.4 322.1,551.2 323.7,550.0 324.9,551.2 326.1,549.3 327.7,549.6 328.0,552.0 328.8,549.6 330.4,548.9 331.6,547.3 334.4,548.1 335.2,549.6 336.8,552.4 337.6,555.2 338.8,555.2 338.8,563.1 337.6,561.9 336.8,563.1 335.6,567.9 334.8,564.7 333.6,561.1 332.8,565.9 331.2,564.3 330.0,563.5 329.2,558.4 328.0,558.4 326.5,558.4 326.5,573.8 325.7,566.3 324.9,566.3 323.3,566.7 322.1,567.9 320.5,567.9 318.5,567.1 317.0,570.3 316.2,568.7 315.4,565.9 314.2,569.9 313.8,563.1 311.4,563.1 310.6,565.9 310.0,565.9"/><rect x="294.1" y="550.8" width="1.0" height="36.9"/><rect x="304.9" y="569.1" width="1.0" height="37.7"/><rect x="324.0" y="566.3" width="1.0" height="36.5"/><rect x="338.0" y="555.2" width="1.0" height="37.3"/><rect x="344.0" y="558.0" width="1.0" height="33.7"/><rect x="301.1" y="564.3" width="2.8" height="37.7"/><rect x="302.3" y="602.0" width="0.8" height="4.8"/><rect x="303.9" y="585.7" width="1.6" height="4.0"/><rect x="305.9" y="577.0" width="2.0" height="2.8"/><rect x="308.1" y="559.2" width="1.9" height="47.6"/><rect x="317.0" y="567.1" width="3.2" height="39.6"/><rect x="320.1" y="567.9" width="1.6" height="32.5"/><rect x="341.1" y="566.3" width="3.6" height="25.4"/><rect x="341.1" y="591.7" width="2.0" height="15.1"/></g><clipPath id="c32"><rect x="422" y="538" width="86" height="68"/></clipPath><g clip-path="url(#c32)" fill="#0000ff"><polygon points="425.9,554.4 427.5,554.4 429.1,553.2 430.7,552.0 432.3,552.8 432.7,554.4 433.1,564.7 433.7,565.5 433.7,577.4 433.1,577.4 432.7,571.8 431.9,563.1 431.1,561.1 429.9,561.1 428.3,562.7 427.9,565.5 427.1,565.9 426.7,563.1"/><polygon points="439.0,555.2 440.6,553.6 441.8,551.6 442.6,549.3 444.2,550.8 446.5,548.9 447.7,551.2 448.9,553.2 449.3,560.7 449.7,561.1 449.7,567.9 448.5,567.9 448.1,561.5 447.3,561.1 446.9,563.9 445.7,563.9 445.3,558.4 443.8,562.7 442.6,563.1 441.4,566.7 440.6,564.7 439.8,565.1"/><polygon points="454.1,561.1 455.7,560.0 456.0,555.2 457.6,554.0 459.2,555.2 461.6,554.8 462.4,553.2 463.6,551.2 465.2,548.1 466.0,551.2 467.5,553.2 468.7,554.8 470.7,555.6 471.9,556.4 472.7,571.4 472.7,598.0 471.9,598.0 471.9,606.7 469.1,606.7 468.7,570.3 467.9,565.5 467.1,564.7 466.0,565.1 466.0,571.0 465.2,571.0 464.4,563.9 463.6,563.9 463.6,571.8 462.8,572.2 462.4,563.1 460.8,562.3 460.0,561.9 458.8,564.7 457.6,565.1 457.6,594.0 456.4,594.0 456.0,606.7 452.9,606.7 452.9,571.8 454.1,571.8"/><rect x="424.0" y="565.1" width="1.0" height="37.7"/><rect x="426.0" y="554.0" width="1.0" height="39.6"/><rect x="432.9" y="564.7" width="1.0" height="42.0"/><rect x="436.0" y="569.9" width="1.0" height="36.9"/><rect x="438.9" y="555.2" width="1.0" height="34.5"/><rect x="449.0" y="560.7" width="1.0" height="46.0"/><rect x="450.9" y="569.1" width="1.0" height="37.7"/><rect x="461.9" y="563.1" width="1.0" height="43.6"/><rect x="433.9" y="577.8" width="2.8" height="1.0"/><rect x="437.0" y="575.0" width="1.6" height="3.2"/><rect x="449.7" y="575.0" width="3.2" height="7.1"/></g><clipPath id="c33"><rect x="550" y="538" width="86" height="68"/></clipPath><g clip-path="url(#c33)" fill="#0000ff"><polygon points="550.4,558.0 551.5,560.3 552.7,561.1 552.7,602.8 551.9,602.8 551.7,571.0 550.9,571.0"/><polygon points="557.1,553.2 558.3,552.0 560.3,551.2 561.9,551.6 562.6,552.0 564.9,552.0 564.9,600.8 564.1,600.8 563.8,560.7 562.6,561.9 561.9,561.1 561.1,560.0 560.7,558.0 559.9,560.7 557.9,560.7 557.9,565.5"/><polygon points="569.0,555.2 571.0,551.2 573.0,549.3 574.5,548.9 576.1,548.1 577.7,548.1 579.3,549.3 580.9,550.4 582.9,551.6 582.9,598.8 582.1,598.8 581.7,563.9 580.1,562.3 579.3,560.3 578.5,563.1 577.3,562.3 576.5,558.4 575.7,558.4 575.7,571.8 574.9,571.8 574.1,564.7 573.0,563.5 571.4,562.7 570.2,566.3 569.4,569.1"/><polygon points="588.0,554.4 590.4,552.0 592.8,550.0 594.0,552.8 595.1,549.3 599.9,549.3 600.1,556.8 600.7,557.6 600.7,566.7 599.9,566.7 599.5,564.3 597.9,566.3 597.1,565.1 596.7,569.9 595.9,569.9 595.5,559.2 594.4,560.7 592.8,561.5 591.6,560.7 590.0,561.9 589.6,569.5 588.8,569.9"/><rect x="550.1" y="558.0" width="1.0" height="48.8"/><rect x="584.9" y="567.9" width="1.0" height="36.9"/><rect x="587.9" y="554.4" width="1.0" height="52.3"/><rect x="552.7" y="591.7" width="2.0" height="3.2"/><rect x="555.1" y="565.1" width="2.8" height="38.4"/><rect x="557.1" y="603.6" width="1.0" height="3.2"/><rect x="568.0" y="569.1" width="1.7" height="37.7"/><rect x="582.9" y="583.3" width="3.2" height="2.4"/><rect x="586.0" y="582.9" width="1.2" height="19.0"/><line x1="564.9" y1="580.6" x2="567.4" y2="576.2" stroke="#0000ff" stroke-width="1"/></g><clipPath id="c34"><rect x="678" y="538" width="86" height="68"/></clipPath><g clip-path="url(#c34)" fill="#0000ff"><polygon points="678.4,552.8 679.2,551.2 680.7,551.2 681.9,553.2 682.9,554.4 683.1,560.7 683.9,561.5 683.9,600.8 683.1,600.8 682.7,564.7 681.9,564.7 681.5,560.7 679.5,560.7 678.9,560.0"/><polygon points="687.1,555.2 689.1,552.8 691.0,551.2 693.4,550.0 694.6,553.6 696.6,554.0 697.0,565.9 697.8,566.3 697.8,606.7 697.0,606.7 696.2,600.8 696.2,565.5 695.4,563.9 694.2,561.9 693.4,558.8 692.2,558.8 691.4,561.9 690.6,567.9 689.9,564.7 688.7,563.9 687.9,563.9"/><polygon points="700.2,558.4 701.3,555.2 702.1,552.0 703.3,548.1 704.9,548.1 705.3,550.4 706.5,549.3 709.7,549.3 710.5,547.3 712.0,548.9 713.6,552.4 714.8,554.4 715.2,556.8 715.6,565.5 717.6,566.3 717.6,585.3 718.8,585.3 718.8,590.9 720.4,590.9 721.6,596.4 721.6,606.7 720.8,606.7 720.0,600.8 719.6,596.8 718.0,595.6 716.4,595.6 716.0,571.8 714.8,566.3 713.6,560.0 712.8,559.2 711.7,561.9 710.9,559.2 710.5,600.8 709.8,600.8 709.7,564.7 708.9,564.7 708.1,558.8 706.9,559.2 706.1,566.3 705.7,606.7 704.5,606.7 704.5,580.2 703.7,580.2 703.7,606.7 702.9,606.7 702.1,594.0 701.7,566.3 701.0,566.3"/><polygon points="721.2,555.6 723.1,554.0 724.3,549.3 726.3,550.0 727.9,552.4 728.7,556.4 728.9,563.5 727.9,563.5 727.1,560.0 724.3,560.0 723.9,561.9 722.0,561.9 721.6,564.7"/><rect x="678.1" y="552.8" width="1.0" height="48.4"/><rect x="685.0" y="565.1" width="1.0" height="41.6"/><rect x="687.1" y="555.2" width="1.0" height="47.6"/><rect x="700.0" y="558.4" width="1.0" height="48.4"/><rect x="720.1" y="564.7" width="1.6" height="36.5"/><rect x="683.5" y="577.0" width="1.6" height="2.0"/><rect x="685.5" y="586.1" width="2.0" height="2.4"/><rect x="697.8" y="579.8" width="2.4" height="2.0"/></g><clipPath id="c41"><rect x="294" y="667" width="87" height="69"/></clipPath><g clip-path="url(#c41)" fill="#0000ff"><polygon points="294.4,677.9 295.9,678.6 298.7,678.6 299.5,677.9 300.3,679.0 301.9,679.0 303.1,681.0 304.3,685.8 305.1,690.9 305.9,691.3 306.3,697.7 306.8,698.5 306.8,733.3 305.9,734.1 305.5,735.7 305.1,735.7 304.7,697.7 302.7,696.9 302.7,735.7 301.9,735.7 301.5,723.8 301.1,704.8 299.9,704.8 299.5,696.9 297.9,696.9 297.5,698.9 296.3,698.9 295.5,688.2 294.8,688.2"/><polygon points="308.2,695.3 309.0,691.3 310.2,689.3 312.2,688.2 313.4,685.0 315.4,687.4 315.8,691.7 317.3,691.7 317.3,685.0 317.7,685.4 318.1,693.7 318.9,694.5 318.9,735.7 317.3,735.7 316.6,731.8 315.8,700.8 315.0,701.2 315.0,734.5 313.8,734.5 313.8,707.2 313.0,707.2 312.6,726.6 311.8,726.2 311.4,708.8 310.6,701.2 309.4,701.2 309.4,735.7 308.9,735.7"/><polygon points="326.9,680.2 328.0,679.8 329.2,679.0 330.0,680.6 333.2,680.2 333.6,680.6 333.6,690.1 331.6,690.9 330.0,689.3 329.2,686.6 328.4,689.0 327.7,689.3"/><rect x="294.1" y="677.9" width="1.0" height="52.3"/><rect x="308.1" y="697.7" width="1.0" height="24.2"/><rect x="321.0" y="696.1" width="1.0" height="25.8"/><rect x="326.7" y="680.2" width="1.0" height="48.4"/><rect x="332.9" y="680.6" width="1.0" height="44.8"/><rect x="335.9" y="696.1" width="1.0" height="31.7"/><rect x="338.0" y="673.9" width="1.0" height="61.8"/><rect x="341.8" y="693.3" width="1.0" height="42.4"/><rect x="344.0" y="690.1" width="1.0" height="45.6"/><rect x="305.9" y="711.1" width="2.8" height="3.2"/><rect x="318.9" y="705.2" width="2.0" height="3.6"/><rect x="320.5" y="709.6" width="2.0" height="6.3"/><rect x="322.9" y="709.6" width="2.0" height="4.0"/><rect x="324.1" y="696.1" width="3.2" height="29.3"/><rect x="333.2" y="716.7" width="1.6" height="6.3"/><rect x="335.2" y="711.9" width="3.2" height="6.7"/><rect x="338.8" y="706.8" width="5.2" height="2.0"/></g><clipPath id="c42"><rect x="422" y="667" width="86" height="69"/></clipPath><g clip-path="url(#c42)" fill="#0000ff"><polygon points="424.3,682.6 425.9,683.8 427.1,681.8 427.9,682.6 428.1,689.0 429.5,688.2 429.9,687.8 430.3,674.3 430.7,674.3 431.1,685.8 432.1,686.6 432.1,728.6 433.1,729.0 433.1,735.7 431.9,735.7 431.5,713.9 430.7,713.9 430.7,735.7 429.1,735.7 428.7,702.0 427.9,702.0 427.9,735.7 425.9,735.7 425.5,693.7 424.7,693.7"/><polygon points="445.0,687.4 446.1,681.0 447.7,682.6 448.5,685.4 449.7,687.0 450.9,687.4 451.7,690.1 451.7,721.5 450.9,721.5 450.5,700.8 449.7,694.9 447.3,694.1 446.9,728.6 445.7,728.6"/><polygon points="457.2,689.7 458.0,685.4 459.2,683.0 460.8,682.2 461.2,689.0 462.0,685.4 463.6,687.8 466.0,688.2 466.8,695.3 466.8,731.0 466.0,731.0 465.6,715.1 465.2,735.7 464.0,735.7 463.6,702.4 462.8,695.3 461.6,697.7 460.8,734.9 460.0,734.9 459.6,693.7 458.4,698.1 457.6,698.5"/><rect x="424.0" y="674.3" width="1.0" height="49.1"/><rect x="432.9" y="671.9" width="1.0" height="63.8"/><rect x="436.0" y="696.1" width="1.0" height="39.6"/><rect x="439.9" y="694.9" width="1.0" height="36.9"/><rect x="444.8" y="687.4" width="1.0" height="48.4"/><rect x="452.9" y="695.3" width="1.0" height="36.5"/><rect x="456.9" y="689.7" width="1.0" height="46.0"/><rect x="436.6" y="705.6" width="2.0" height="8.7"/><rect x="438.2" y="711.1" width="2.0" height="7.1"/><rect x="451.3" y="711.1" width="2.4" height="4.0"/><rect x="454.1" y="707.6" width="3.2" height="2.4"/><line x1="432.3" y1="714.3" x2="436.6" y2="712.7" stroke="#0000ff" stroke-width="1"/><line x1="441.0" y1="711.9" x2="445.0" y2="707.2" stroke="#0000ff" stroke-width="1"/></g><clipPath id="c43"><rect x="550" y="667" width="86" height="69"/></clipPath><g clip-path="url(#c43)" fill="#0000ff"><polygon points="556.1,680.2 557.1,674.3 558.7,675.1 559.5,678.3 560.1,678.6 560.1,706.4 561.1,707.2 561.1,711.9 560.3,711.9 559.5,706.4 559.1,687.4 557.9,688.2 557.1,689.3"/><polygon points="561.1,680.2 562.6,681.0 563.8,685.0 564.4,680.2 564.9,680.2 564.9,706.4 565.8,707.2 565.8,711.9 567.0,712.7 567.4,717.5 568.2,717.9 568.2,723.0 567.0,723.0 566.6,718.3 565.4,711.9 564.6,706.4 563.8,702.8 563.0,691.3 562.3,690.9 561.9,707.2"/><polygon points="577.3,685.4 578.5,687.0 580.1,687.4 580.9,689.7 581.7,691.3 581.7,704.8 580.9,704.8 580.1,696.9 579.3,697.7 578.1,697.3"/><polygon points="589.2,681.0 590.4,678.3 591.6,680.6 592.8,681.0 594.4,679.0 595.5,680.6 596.7,680.2 596.9,687.0 597.9,687.4 597.9,699.7 597.1,699.7 596.7,694.9 595.9,690.5 594.8,689.7 593.2,689.7 592.0,690.9 591.6,692.9 590.8,695.3 589.8,695.7"/><rect x="552.0" y="686.2" width="1.0" height="43.6"/><rect x="554.0" y="695.3" width="1.0" height="40.8"/><rect x="555.9" y="680.2" width="1.0" height="50.3"/><rect x="560.9" y="680.2" width="1.0" height="49.5"/><rect x="568.1" y="684.2" width="1.0" height="47.6"/><rect x="577.0" y="685.4" width="1.0" height="43.2"/><rect x="588.9" y="681.0" width="1.0" height="44.4"/><rect x="552.3" y="723.8" width="2.0" height="5.9"/><rect x="554.7" y="704.8" width="1.6" height="2.0"/><rect x="568.2" y="685.4" width="1.6" height="21.0"/><line x1="569.6" y1="706.8" x2="577.3" y2="720.7" stroke="#0000ff" stroke-width="1"/><line x1="581.7" y1="704.8" x2="589.2" y2="714.3" stroke="#0000ff" stroke-width="1"/></g><clipPath id="c44"><rect x="678" y="667" width="86" height="69"/></clipPath><g clip-path="url(#c44)" fill="#0000ff"><polygon points="700.2,680.2 701.3,678.3 702.5,678.3 703.7,676.7 705.7,675.1 706.5,678.3 708.1,678.3 708.9,681.0 710.5,683.0 711.3,681.4 712.8,683.4 714.4,679.8 715.6,679.0 716.8,681.0 718.4,681.0 719.6,683.0 720.0,687.4 721.4,687.4 721.6,682.2 722.4,684.6 723.9,685.4 723.9,702.4 723.1,702.4 723.0,696.9 720.8,696.9 720.8,701.6 720.0,701.6 719.6,694.9 719.2,690.9 717.6,690.9 716.8,689.0 715.2,687.0 714.8,692.9 712.8,692.9 712.8,688.2 711.3,688.6 710.5,690.9 709.7,689.0 708.1,686.6 706.9,689.3 705.7,689.7 704.9,688.2 704.5,692.9 703.3,692.1 702.9,687.4 701.0,686.6"/><polygon points="737.0,687.4 738.2,684.2 740.2,683.0 742.2,683.8 744.2,683.0 746.9,683.4 747.7,685.8 748.9,687.4 749.7,693.3 749.7,704.0 748.9,704.0 748.5,696.5 747.3,694.1 746.1,692.5 743.8,691.7 742.6,693.7 741.8,692.1 740.6,693.7 739.4,693.7 738.2,692.9 737.6,692.9"/><rect x="700.0" y="680.2" width="1.0" height="55.5"/><rect x="737.1" y="687.4" width="1.0" height="34.5"/><line x1="723.5" y1="702.4" x2="737.4" y2="720.7" stroke="#0000ff" stroke-width="1"/></g><clipPath id="c52"><rect x="422" y="797" width="86" height="68"/></clipPath><g clip-path="url(#c52)" fill="#0000ff"><rect x="431.9" y="808.3" width="1.0" height="57.1"/><rect x="499.0" y="809.0" width="1.0" height="56.3"/><rect x="432.4" y="819.9" width="8.6" height="1.0"/><rect x="441.0" y="821.0" width="17.0" height="1.0"/><rect x="458.0" y="822.0" width="15.9" height="1.0"/><rect x="473.9" y="823.1" width="17.0" height="1.0"/><rect x="490.9" y="824.0" width="8.6" height="1.0"/></g><clipPath id="c56"><rect x="933" y="797" width="87" height="68"/></clipPath><g clip-path="url(#c56)" fill="#0000ff"><polygon points="936.9,838.8 939.3,834.0 940.5,837.2 942.1,835.2 942.9,841.1 944.5,841.5 944.5,831.2 946.4,830.0 948.4,831.6 949.2,826.1 950.4,826.1 950.4,836.4 949.2,837.2 948.0,837.6 947.6,844.7 947.1,844.7 946.8,838.8 945.6,838.0 944.5,842.7 943.7,842.7 943.7,848.7 942.9,848.7 942.1,843.5 941.7,850.7 940.9,850.7 940.9,861.8 940.1,861.8 939.7,846.3 938.9,845.9 938.1,842.7 937.3,840.0"/><polyline points="950.2,826.1 950.2,811.0 952.8,811.0 953.6,810.2 954.4,812.2 956.7,812.2 957.9,810.4 959.1,811.4 959.5,813.4 959.9,811.4 962.3,811.8 962.7,812.6 965.1,812.6 965.5,813.4 966.3,811.4 967.8,812.2 969.4,811.0 971.8,811.4 972.2,813.8 973.4,815.4 973.8,818.6 974.6,819.0 974.6,834.8 975.4,835.2 975.4,852.6 986.7,852.6 986.7,855.4 989.9,855.4" fill="none" stroke="#0000ff" stroke-width="1"/></g></svg>
</body></html>
